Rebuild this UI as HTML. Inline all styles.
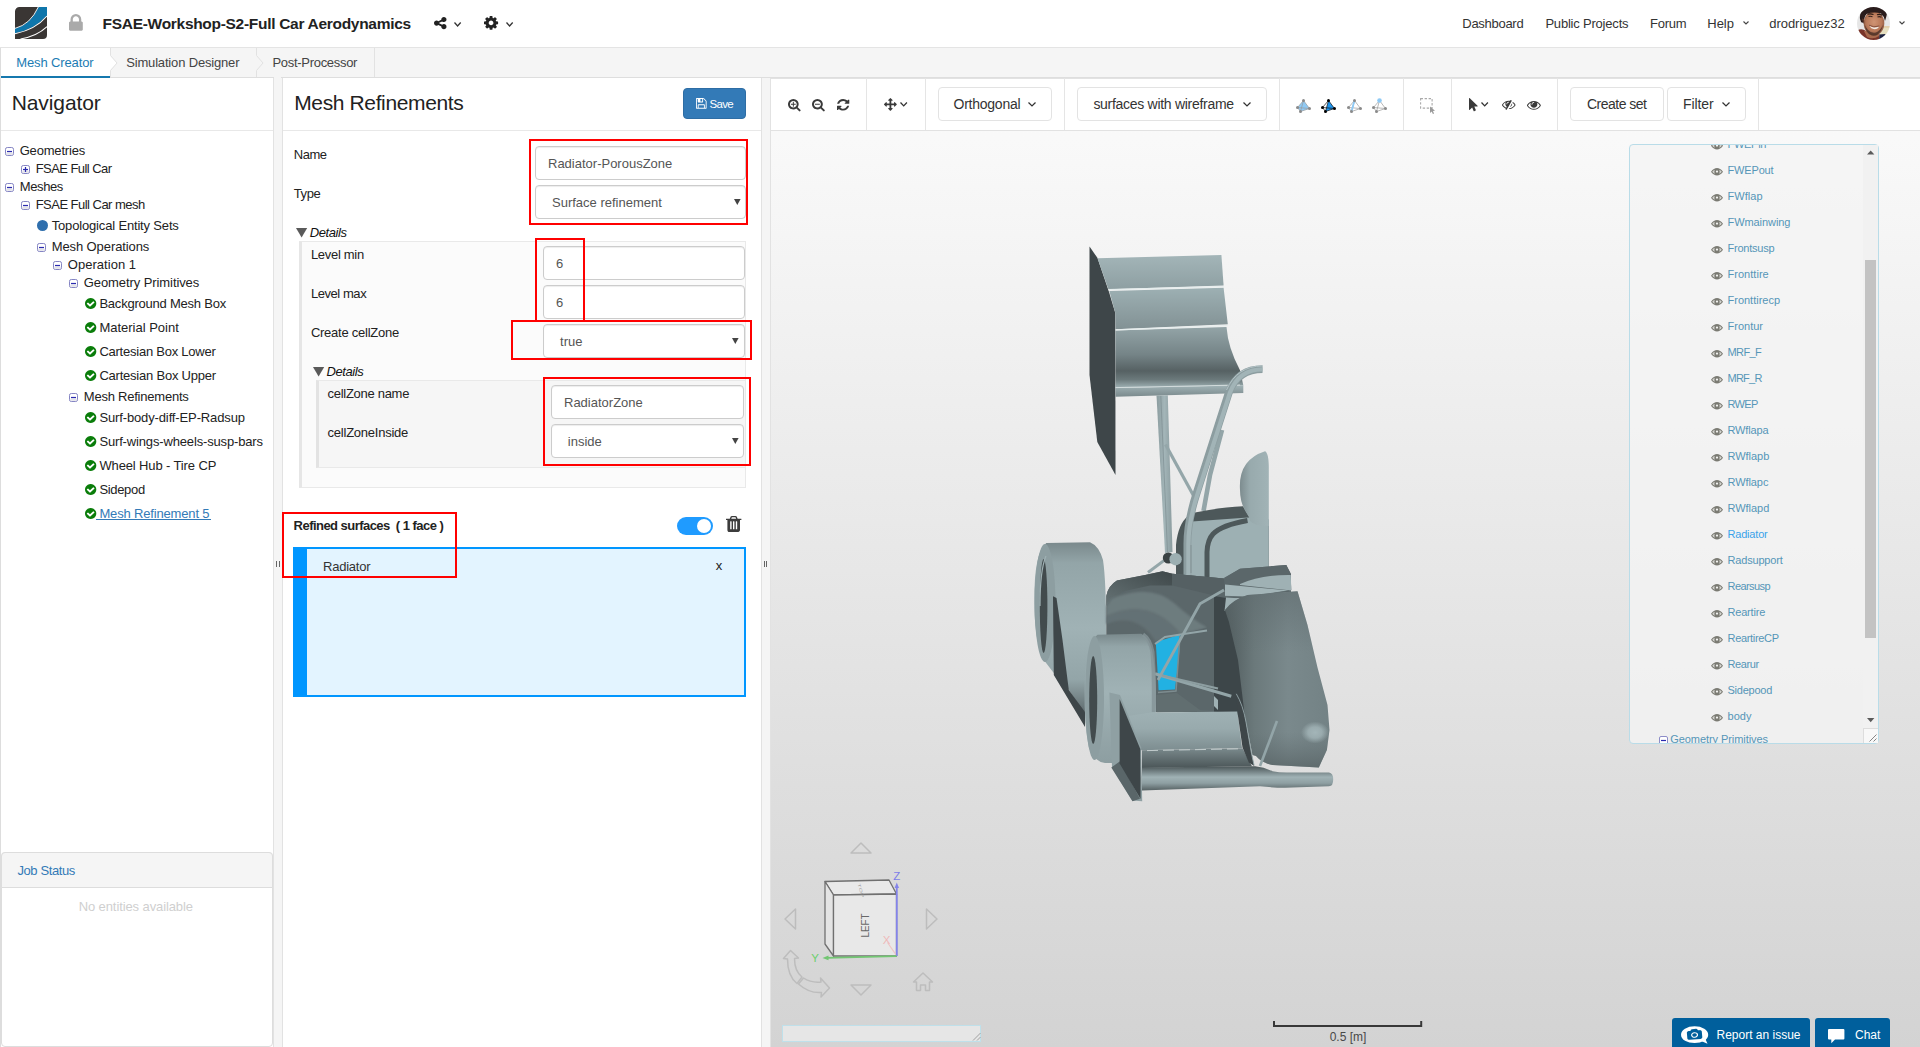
<!DOCTYPE html>
<html lang="en"><head><meta charset="utf-8"><title>FSAE-Workshop-S2-Full Car Aerodynamics</title>
<style>
html,body{margin:0;padding:0}
body{width:1920px;height:1047px;overflow:hidden;position:relative;background:#f5f5f5;font-family:"Liberation Sans",sans-serif;}
.t{position:absolute;white-space:pre;line-height:20px;height:20px;display:block}
.ic{position:absolute;display:block;overflow:visible}
.b{position:absolute;box-sizing:border-box}
.inp{position:absolute;box-sizing:border-box;background:#fff;border:1px solid #ccc;border-radius:4px;height:34px;box-shadow:inset 0 1px 1px rgba(0,0,0,.075)}
.red{position:absolute;box-sizing:border-box;border:2px solid #ff0000}
.btn{position:absolute;box-sizing:border-box;background:#fff;border:1px solid #e3e3e3;border-radius:4px}
.vd{position:absolute;width:1px;background:#e5e5e5;top:78px;height:52px}

</style></head>
<body>
<div class="b" style="left:0;top:0;width:1920px;height:48px;background:#fff;border-bottom:1px solid #e4e4e4"></div>
<svg class="ic" style="left:15px;top:7px" width="32" height="32" viewBox="0 0 32 32">
<path d="M4.5 0H32V28a4 4 0 0 1-4 4H0V4.5A4.5 4.5 0 0 1 4.500 0Z" fill="#3a3634"/>
<path d="M0 21.6Q15.500 17.500 23.400 0H32V8.400Q20 22 0 26.200Z" fill="#0f76ab"/>
<path d="M0 21.400Q15.500 17.300 23.300 0" fill="none" stroke="#fff" stroke-width="0.9"/>
<path d="M0 26.700Q20.500 22.600 32 9" fill="none" stroke="#fff" stroke-width="1.1"/>
<path d="M5.500 32Q22 29.300 32 19.700" fill="none" stroke="#fff" stroke-width="1.1"/>
</svg>
<svg class="ic" style="left:69.20px;top:14.30px;" width="13.80" height="16.70" viewBox="0 128 1152 1408" preserveAspectRatio="none"><path fill="#aaa" d="M320 768H832V576Q832 470 757.0 395.0Q682 320 576.0 320.0Q470 320 395.0 395.0Q320 470 320 576ZM1152 864V1440Q1152 1480 1124.0 1508.0Q1096 1536 1056 1536H96Q56 1536 28.0 1508.0Q0 1480 0 1440V864Q0 824 28.0 796.0Q56 768 96 768H128V576Q128 392 260.0 260.0Q392 128 576.0 128.0Q760 128 892.0 260.0Q1024 392 1024 576V768H1056Q1096 768 1124.0 796.0Q1152 824 1152 864Z"/></svg>
<span class="t" style="left:102.60px;top:13px;font-size:15.5px;color:#222;line-height:21px;height:21px;font-weight:700;letter-spacing:-0.298px;">FSAE-Workshop-S2-Full Car Aerodynamics</span>
<svg class="ic" style="left:433.90px;top:17.00px;" width="12.50" height="12.20" viewBox="0 128 1536 1536" preserveAspectRatio="none"><path fill="#222" d="M1216 1024Q1349 1024 1442.5 1117.5Q1536 1211 1536.0 1344.0Q1536 1477 1442.5 1570.5Q1349 1664 1216.0 1664.0Q1083 1664 989.5 1570.5Q896 1477 896 1344Q896 1332 898 1310L538 1130Q446 1216 320 1216Q187 1216 93.5 1122.5Q0 1029 0.0 896.0Q0 763 93.5 669.5Q187 576 320 576Q446 576 538 662L898 482Q896 460 896 448Q896 315 989.5 221.5Q1083 128 1216.0 128.0Q1349 128 1442.5 221.5Q1536 315 1536.0 448.0Q1536 581 1442.5 674.5Q1349 768 1216 768Q1090 768 998 682L638 862Q640 884 640.0 896.0Q640 908 638 930L998 1110Q1090 1024 1216 1024Z"/></svg>
<svg class="ic" style="left:454.00px;top:22.00px" width="7.20" height="4.60" viewBox="0 0 7.20 4.60"><path d="M0.5 0.5 L3.60 4.00 L6.70 0.5" fill="none" stroke="#333" stroke-width="1.3"/></svg>
<svg class="ic" style="left:483.90px;top:16.20px;" width="14.10" height="13.80" viewBox="0 128 1536 1536" preserveAspectRatio="none"><path fill="#222" d="M949.0 1077.0Q1024 1002 1024.0 896.0Q1024 790 949.0 715.0Q874 640 768.0 640.0Q662 640 587.0 715.0Q512 790 512.0 896.0Q512 1002 587.0 1077.0Q662 1152 768.0 1152.0Q874 1152 949.0 1077.0ZM1536 787V1009Q1536 1021 1528.0 1032.0Q1520 1043 1508 1045L1323 1073Q1304 1127 1284 1164Q1319 1214 1391 1302Q1401 1314 1401.0 1327.0Q1401 1340 1392 1350Q1365 1387 1293.0 1458.0Q1221 1529 1199 1529Q1187 1529 1173 1520L1035 1412Q991 1435 944 1450Q928 1586 915 1636Q908 1664 879 1664H657Q643 1664 632.5 1655.5Q622 1647 621 1634L593 1450Q544 1434 503 1413L362 1520Q352 1529 337 1529Q323 1529 312 1518Q186 1404 147 1350Q140 1340 140 1327Q140 1315 148 1304Q163 1283 199.0 1237.5Q235 1192 253 1167Q226 1117 212 1068L29 1041Q16 1039 8.0 1028.5Q0 1018 0 1005V783Q0 771 8.0 760.0Q16 749 27 747L213 719Q227 673 252 627Q212 570 145 489Q135 477 135 465Q135 455 144 442Q170 406 242.5 334.5Q315 263 337 263Q350 263 363 273L501 380Q545 357 592 342Q608 206 621 156Q628 128 657 128H879Q893 128 903.5 136.5Q914 145 915 158L943 342Q992 358 1033 379L1175 272Q1184 263 1199 263Q1212 263 1224 273Q1353 392 1389 443Q1396 451 1396 465Q1396 477 1388 488Q1373 509 1337.0 554.5Q1301 600 1283 625Q1309 675 1324 723L1507 751Q1520 753 1528.0 763.5Q1536 774 1536 787Z"/></svg>
<svg class="ic" style="left:506.00px;top:22.00px" width="7.20" height="4.60" viewBox="0 0 7.20 4.60"><path d="M0.5 0.5 L3.60 4.00 L6.70 0.5" fill="none" stroke="#333" stroke-width="1.3"/></svg>
<span class="t" style="left:1462.30px;top:13px;font-size:13px;color:#333;line-height:21px;height:21px;letter-spacing:-0.286px;">Dashboard</span>
<span class="t" style="left:1545.40px;top:13px;font-size:13px;color:#333;line-height:21px;height:21px;letter-spacing:-0.202px;">Public Projects</span>
<span class="t" style="left:1650.00px;top:13px;font-size:13px;color:#333;line-height:21px;height:21px;letter-spacing:-0.272px;">Forum</span>
<span class="t" style="left:1707.30px;top:13px;font-size:13px;color:#333;line-height:21px;height:21px;letter-spacing:-0.022px;">Help</span>
<svg class="ic" style="left:1743.00px;top:21.30px" width="6.00" height="3.60" viewBox="0 0 6.00 3.60"><path d="M0.5 0.5 L3.00 3.00 L5.50 0.5" fill="none" stroke="#444" stroke-width="1.1"/></svg>
<span class="t" style="left:1769.30px;top:13px;font-size:13px;color:#333;line-height:21px;height:21px;letter-spacing:-0.052px;">drodriguez32</span>
<svg class="ic" style="left:1899.00px;top:21.30px" width="6.00" height="3.60" viewBox="0 0 6.00 3.60"><path d="M0.5 0.5 L3.00 3.00 L5.50 0.5" fill="none" stroke="#444" stroke-width="1.1"/></svg>
<svg class="ic" style="left:1857px;top:7px" width="33" height="33" viewBox="0 0 33 33">
<defs><clipPath id="av"><circle cx="16.5" cy="16.400" r="16.500"/></clipPath>
<radialGradient id="face" cx="0.5" cy="0.45" r="0.62"><stop offset="0" stop-color="#cf9474"/><stop offset="0.6" stop-color="#b87858"/><stop offset="1" stop-color="#7b4a38"/></radialGradient>
<filter id="bl" x="-10%" y="-10%" width="120%" height="120%"><feGaussianBlur stdDeviation="0.55"/></filter></defs>
<g clip-path="url(#av)"><g filter="url(#bl)">
<rect x="-2" y="-2" width="37" height="37" fill="#e6e6e6"/>
<path d="M24 19.500H35V31H22Z" fill="#e6dfc0"/>
<path d="M26 19.200H35V20.600H26Z" fill="#e2c9a0"/>
<path d="M2 22.500Q6 21.500 9 24L16 30L22.500 27V35H-2V26Z" fill="#7a362c"/>
<path d="M22.500 27.500L28.500 27L27 32L22 35Z" fill="#1a2040"/>
<path d="M7 24L10 30Q16 33 22 29L22.500 24Z" fill="#a86a4e"/>
<ellipse cx="17" cy="16.300" rx="10.300" ry="12.300" fill="url(#face)"/>
<path d="M7.500 17Q8.500 24 12 27Q16 30 20 28Q24.500 25 26 18Q23 24 19 25.500Q14 26.500 11 23Q8.500 20.500 7.500 17Z" fill="#4a2f25" opacity="0.8"/>
<path d="M12.300 18.600Q16 21.800 22 19.600Q21 22.300 17.500 22.300Q14 22 12.300 18.600Z" fill="#f3ebe4"/>
<path d="M12 18.200Q16.500 21 22.300 19" stroke="#6a3a2c" stroke-width="0.7" fill="none"/>
<path d="M10.500 7.300Q13.500 6.300 16.500 7.600M20 7.800Q23 6.800 25.500 8.200" stroke="#2a1a16" stroke-width="1.1" fill="none"/>
<path d="M11.500 9.600Q13.500 8.800 15.500 9.800M20.500 10Q22.500 9.200 24.500 10.300" stroke="#3a2620" stroke-width="1.1" fill="none"/>
<path d="M3 12Q2 4 9 1Q16-2.500 24 0.500Q31 4 29.500 9L28 14Q27 9 24 6.500Q17 4.500 9.500 7Q7.500 9 7 12.500L5.500 16Q3.500 15 3 12Z" fill="#2a1d1c"/>
<path d="M4.800 11.500Q5.500 15 7.300 17.500L7 12Z" fill="#5a3528"/>
</g></g></svg>
<div class="b" style="left:0;top:48px;width:1920px;height:30px;background:#f5f5f5;border-bottom:1px solid #dedede;border-left:1px solid #ddd"></div>
<div class="b" style="left:1px;top:48px;width:109px;height:30px;background:#fff;border-bottom:2px solid #1578ae"></div>
<svg class="ic" style="left:108px;top:48px" width="12" height="30" viewBox="0 0 12 30">
<path d="M0 0H2V7.500L9 15L2 22.500V28H0Z" fill="#fff"/>
<path d="M2.500 0V7.500L9 15L2.500 22.500V29" fill="none" stroke="#e2e2e2" stroke-width="1"/></svg>
<svg class="ic" style="left:254px;top:48px" width="12" height="30" viewBox="0 0 12 30">
<path d="M2.500 0V7.500L9 15L2.500 22.500V29" fill="none" stroke="#e2e2e2" stroke-width="1"/></svg>
<div class="b" style="left:374px;top:48px;width:1px;height:29px;background:#e2e2e2"></div>
<div class="b" style="left:274px;top:77px;width:7px;height:1px;background:#f5f5f5"></div>
<span class="t" style="left:16.30px;top:52px;font-size:13px;color:#1c7cb3;line-height:21px;height:21px;letter-spacing:-0.136px;">Mesh Creator</span>
<span class="t" style="left:126.20px;top:52px;font-size:13px;color:#444;line-height:21px;height:21px;letter-spacing:-0.167px;">Simulation Designer</span>
<span class="t" style="left:272.50px;top:52px;font-size:13px;color:#444;line-height:21px;height:21px;letter-spacing:-0.303px;">Post-Processor</span>
<div class="b" style="left:0;top:78px;width:274px;height:969px;background:#fff;border-left:1px solid #ddd;border-right:1px solid #e2e2e2"></div>
<div class="b" style="left:1px;top:130px;width:272px;height:1px;background:#e8e8e8"></div>
<span class="t" style="left:11.70px;top:92px;font-size:21px;color:#222;line-height:21px;height:21px;letter-spacing:-0.091px;">Navigator</span>
<svg class="ic" style="left:5px;top:147px" width="9" height="9" viewBox="0 0 9 9"><rect x="0.5" y="0.5" width="8" height="8" rx="1.800" fill="#fff" stroke="#8585c4"/><rect x="1.200" y="5.500" width="6.600" height="2.300" rx="1" fill="#e2e2e8"/><path d="M2 4.500H7" stroke="#2a2ab0" stroke-width="1.2"/></svg>
<span class="t" style="left:19.70px;top:140px;font-size:13px;color:#222;line-height:21px;height:21px;letter-spacing:-0.188px;">Geometries</span>
<svg class="ic" style="left:21px;top:165px" width="9" height="9" viewBox="0 0 9 9"><rect x="0.5" y="0.5" width="8" height="8" rx="1.800" fill="#fff" stroke="#8585c4"/><rect x="1.200" y="5.500" width="6.600" height="2.300" rx="1" fill="#e2e2e8"/><path d="M2 4.500H7" stroke="#2a2ab0" stroke-width="1.2"/><path d="M4.500 2V7" stroke="#2a2ab0" stroke-width="1.2"/></svg>
<span class="t" style="left:35.70px;top:158px;font-size:13px;color:#222;line-height:21px;height:21px;letter-spacing:-0.560px;">FSAE Full Car</span>
<svg class="ic" style="left:5px;top:183px" width="9" height="9" viewBox="0 0 9 9"><rect x="0.5" y="0.5" width="8" height="8" rx="1.800" fill="#fff" stroke="#8585c4"/><rect x="1.200" y="5.500" width="6.600" height="2.300" rx="1" fill="#e2e2e8"/><path d="M2 4.500H7" stroke="#2a2ab0" stroke-width="1.2"/></svg>
<span class="t" style="left:19.70px;top:176px;font-size:13px;color:#222;line-height:21px;height:21px;letter-spacing:-0.373px;">Meshes</span>
<svg class="ic" style="left:21px;top:201px" width="9" height="9" viewBox="0 0 9 9"><rect x="0.5" y="0.5" width="8" height="8" rx="1.800" fill="#fff" stroke="#8585c4"/><rect x="1.200" y="5.500" width="6.600" height="2.300" rx="1" fill="#e2e2e8"/><path d="M2 4.500H7" stroke="#2a2ab0" stroke-width="1.2"/></svg>
<span class="t" style="left:35.70px;top:194px;font-size:13px;color:#222;line-height:21px;height:21px;letter-spacing:-0.528px;">FSAE Full Car mesh</span>
<div class="b" style="left:37px;top:219.8px;width:11px;height:11px;border-radius:50%;background:#2f6fad"></div>
<span class="t" style="left:51.70px;top:215px;font-size:13px;color:#222;line-height:21px;height:21px;letter-spacing:-0.164px;">Topological Entity Sets</span>
<svg class="ic" style="left:37px;top:243px" width="9" height="9" viewBox="0 0 9 9"><rect x="0.5" y="0.5" width="8" height="8" rx="1.800" fill="#fff" stroke="#8585c4"/><rect x="1.200" y="5.500" width="6.600" height="2.300" rx="1" fill="#e2e2e8"/><path d="M2 4.500H7" stroke="#2a2ab0" stroke-width="1.2"/></svg>
<span class="t" style="left:51.70px;top:236px;font-size:13px;color:#222;line-height:21px;height:21px;letter-spacing:-0.096px;">Mesh Operations</span>
<svg class="ic" style="left:53px;top:261px" width="9" height="9" viewBox="0 0 9 9"><rect x="0.5" y="0.5" width="8" height="8" rx="1.800" fill="#fff" stroke="#8585c4"/><rect x="1.200" y="5.500" width="6.600" height="2.300" rx="1" fill="#e2e2e8"/><path d="M2 4.500H7" stroke="#2a2ab0" stroke-width="1.2"/></svg>
<span class="t" style="left:67.80px;top:254px;font-size:13px;color:#222;line-height:21px;height:21px;letter-spacing:0.031px;">Operation 1</span>
<svg class="ic" style="left:69px;top:279px" width="9" height="9" viewBox="0 0 9 9"><rect x="0.5" y="0.5" width="8" height="8" rx="1.800" fill="#fff" stroke="#8585c4"/><rect x="1.200" y="5.500" width="6.600" height="2.300" rx="1" fill="#e2e2e8"/><path d="M2 4.500H7" stroke="#2a2ab0" stroke-width="1.2"/></svg>
<span class="t" style="left:83.80px;top:272px;font-size:13px;color:#222;line-height:21px;height:21px;letter-spacing:-0.086px;">Geometry Primitives</span>
<svg class="ic" style="left:84.90px;top:297.90px;background:radial-gradient(circle,#fff 55%,rgba(255,255,255,0) 60%)" width="11.30" height="11.10" viewBox="0 128 1536 1536" preserveAspectRatio="none"><path fill="#0a7d0a" d="M1284 734Q1284 706 1266 688L1175 598Q1156 579 1130.0 579.0Q1104 579 1085 598L677 1005L451 779Q432 760 406.0 760.0Q380 760 361 779L270 869Q252 887 252 915Q252 942 270 960L632 1322Q651 1341 677 1341Q704 1341 723 1322L1266 779Q1284 761 1284 734ZM1433.0 510.5Q1536 687 1536.0 896.0Q1536 1105 1433.0 1281.5Q1330 1458 1153.5 1561.0Q977 1664 768.0 1664.0Q559 1664 382.5 1561.0Q206 1458 103.0 1281.5Q0 1105 0.0 896.0Q0 687 103.0 510.5Q206 334 382.5 231.0Q559 128 768.0 128.0Q977 128 1153.5 231.0Q1330 334 1433.0 510.5Z"/></svg>
<span class="t" style="left:99.40px;top:293px;font-size:13px;color:#222;line-height:21px;height:21px;letter-spacing:-0.221px;">Background Mesh Box</span>
<svg class="ic" style="left:84.90px;top:321.90px;background:radial-gradient(circle,#fff 55%,rgba(255,255,255,0) 60%)" width="11.30" height="11.10" viewBox="0 128 1536 1536" preserveAspectRatio="none"><path fill="#0a7d0a" d="M1284 734Q1284 706 1266 688L1175 598Q1156 579 1130.0 579.0Q1104 579 1085 598L677 1005L451 779Q432 760 406.0 760.0Q380 760 361 779L270 869Q252 887 252 915Q252 942 270 960L632 1322Q651 1341 677 1341Q704 1341 723 1322L1266 779Q1284 761 1284 734ZM1433.0 510.5Q1536 687 1536.0 896.0Q1536 1105 1433.0 1281.5Q1330 1458 1153.5 1561.0Q977 1664 768.0 1664.0Q559 1664 382.5 1561.0Q206 1458 103.0 1281.5Q0 1105 0.0 896.0Q0 687 103.0 510.5Q206 334 382.5 231.0Q559 128 768.0 128.0Q977 128 1153.5 231.0Q1330 334 1433.0 510.5Z"/></svg>
<span class="t" style="left:99.40px;top:317px;font-size:13px;color:#222;line-height:21px;height:21px;letter-spacing:-0.004px;">Material Point</span>
<svg class="ic" style="left:84.90px;top:345.90px;background:radial-gradient(circle,#fff 55%,rgba(255,255,255,0) 60%)" width="11.30" height="11.10" viewBox="0 128 1536 1536" preserveAspectRatio="none"><path fill="#0a7d0a" d="M1284 734Q1284 706 1266 688L1175 598Q1156 579 1130.0 579.0Q1104 579 1085 598L677 1005L451 779Q432 760 406.0 760.0Q380 760 361 779L270 869Q252 887 252 915Q252 942 270 960L632 1322Q651 1341 677 1341Q704 1341 723 1322L1266 779Q1284 761 1284 734ZM1433.0 510.5Q1536 687 1536.0 896.0Q1536 1105 1433.0 1281.5Q1330 1458 1153.5 1561.0Q977 1664 768.0 1664.0Q559 1664 382.5 1561.0Q206 1458 103.0 1281.5Q0 1105 0.0 896.0Q0 687 103.0 510.5Q206 334 382.5 231.0Q559 128 768.0 128.0Q977 128 1153.5 231.0Q1330 334 1433.0 510.5Z"/></svg>
<span class="t" style="left:99.40px;top:341px;font-size:13px;color:#222;line-height:21px;height:21px;letter-spacing:-0.239px;">Cartesian Box Lower</span>
<svg class="ic" style="left:84.90px;top:369.90px;background:radial-gradient(circle,#fff 55%,rgba(255,255,255,0) 60%)" width="11.30" height="11.10" viewBox="0 128 1536 1536" preserveAspectRatio="none"><path fill="#0a7d0a" d="M1284 734Q1284 706 1266 688L1175 598Q1156 579 1130.0 579.0Q1104 579 1085 598L677 1005L451 779Q432 760 406.0 760.0Q380 760 361 779L270 869Q252 887 252 915Q252 942 270 960L632 1322Q651 1341 677 1341Q704 1341 723 1322L1266 779Q1284 761 1284 734ZM1433.0 510.5Q1536 687 1536.0 896.0Q1536 1105 1433.0 1281.5Q1330 1458 1153.5 1561.0Q977 1664 768.0 1664.0Q559 1664 382.5 1561.0Q206 1458 103.0 1281.5Q0 1105 0.0 896.0Q0 687 103.0 510.5Q206 334 382.5 231.0Q559 128 768.0 128.0Q977 128 1153.5 231.0Q1330 334 1433.0 510.5Z"/></svg>
<span class="t" style="left:99.40px;top:365px;font-size:13px;color:#222;line-height:21px;height:21px;letter-spacing:-0.220px;">Cartesian Box Upper</span>
<svg class="ic" style="left:69px;top:393px" width="9" height="9" viewBox="0 0 9 9"><rect x="0.5" y="0.5" width="8" height="8" rx="1.800" fill="#fff" stroke="#8585c4"/><rect x="1.200" y="5.500" width="6.600" height="2.300" rx="1" fill="#e2e2e8"/><path d="M2 4.500H7" stroke="#2a2ab0" stroke-width="1.2"/></svg>
<span class="t" style="left:83.80px;top:386px;font-size:13px;color:#222;line-height:21px;height:21px;letter-spacing:-0.227px;">Mesh Refinements</span>
<svg class="ic" style="left:84.90px;top:411.90px;background:radial-gradient(circle,#fff 55%,rgba(255,255,255,0) 60%)" width="11.30" height="11.10" viewBox="0 128 1536 1536" preserveAspectRatio="none"><path fill="#0a7d0a" d="M1284 734Q1284 706 1266 688L1175 598Q1156 579 1130.0 579.0Q1104 579 1085 598L677 1005L451 779Q432 760 406.0 760.0Q380 760 361 779L270 869Q252 887 252 915Q252 942 270 960L632 1322Q651 1341 677 1341Q704 1341 723 1322L1266 779Q1284 761 1284 734ZM1433.0 510.5Q1536 687 1536.0 896.0Q1536 1105 1433.0 1281.5Q1330 1458 1153.5 1561.0Q977 1664 768.0 1664.0Q559 1664 382.5 1561.0Q206 1458 103.0 1281.5Q0 1105 0.0 896.0Q0 687 103.0 510.5Q206 334 382.5 231.0Q559 128 768.0 128.0Q977 128 1153.5 231.0Q1330 334 1433.0 510.5Z"/></svg>
<span class="t" style="left:99.40px;top:407px;font-size:13px;color:#222;line-height:21px;height:21px;letter-spacing:-0.131px;">Surf-body-diff-EP-Radsup</span>
<svg class="ic" style="left:84.90px;top:435.90px;background:radial-gradient(circle,#fff 55%,rgba(255,255,255,0) 60%)" width="11.30" height="11.10" viewBox="0 128 1536 1536" preserveAspectRatio="none"><path fill="#0a7d0a" d="M1284 734Q1284 706 1266 688L1175 598Q1156 579 1130.0 579.0Q1104 579 1085 598L677 1005L451 779Q432 760 406.0 760.0Q380 760 361 779L270 869Q252 887 252 915Q252 942 270 960L632 1322Q651 1341 677 1341Q704 1341 723 1322L1266 779Q1284 761 1284 734ZM1433.0 510.5Q1536 687 1536.0 896.0Q1536 1105 1433.0 1281.5Q1330 1458 1153.5 1561.0Q977 1664 768.0 1664.0Q559 1664 382.5 1561.0Q206 1458 103.0 1281.5Q0 1105 0.0 896.0Q0 687 103.0 510.5Q206 334 382.5 231.0Q559 128 768.0 128.0Q977 128 1153.5 231.0Q1330 334 1433.0 510.5Z"/></svg>
<span class="t" style="left:99.40px;top:431px;font-size:13px;color:#222;line-height:21px;height:21px;letter-spacing:-0.153px;">Surf-wings-wheels-susp-bars</span>
<svg class="ic" style="left:84.90px;top:459.90px;background:radial-gradient(circle,#fff 55%,rgba(255,255,255,0) 60%)" width="11.30" height="11.10" viewBox="0 128 1536 1536" preserveAspectRatio="none"><path fill="#0a7d0a" d="M1284 734Q1284 706 1266 688L1175 598Q1156 579 1130.0 579.0Q1104 579 1085 598L677 1005L451 779Q432 760 406.0 760.0Q380 760 361 779L270 869Q252 887 252 915Q252 942 270 960L632 1322Q651 1341 677 1341Q704 1341 723 1322L1266 779Q1284 761 1284 734ZM1433.0 510.5Q1536 687 1536.0 896.0Q1536 1105 1433.0 1281.5Q1330 1458 1153.5 1561.0Q977 1664 768.0 1664.0Q559 1664 382.5 1561.0Q206 1458 103.0 1281.5Q0 1105 0.0 896.0Q0 687 103.0 510.5Q206 334 382.5 231.0Q559 128 768.0 128.0Q977 128 1153.5 231.0Q1330 334 1433.0 510.5Z"/></svg>
<span class="t" style="left:99.40px;top:455px;font-size:13px;color:#222;line-height:21px;height:21px;letter-spacing:-0.126px;">Wheel Hub - Tire CP</span>
<svg class="ic" style="left:84.90px;top:483.90px;background:radial-gradient(circle,#fff 55%,rgba(255,255,255,0) 60%)" width="11.30" height="11.10" viewBox="0 128 1536 1536" preserveAspectRatio="none"><path fill="#0a7d0a" d="M1284 734Q1284 706 1266 688L1175 598Q1156 579 1130.0 579.0Q1104 579 1085 598L677 1005L451 779Q432 760 406.0 760.0Q380 760 361 779L270 869Q252 887 252 915Q252 942 270 960L632 1322Q651 1341 677 1341Q704 1341 723 1322L1266 779Q1284 761 1284 734ZM1433.0 510.5Q1536 687 1536.0 896.0Q1536 1105 1433.0 1281.5Q1330 1458 1153.5 1561.0Q977 1664 768.0 1664.0Q559 1664 382.5 1561.0Q206 1458 103.0 1281.5Q0 1105 0.0 896.0Q0 687 103.0 510.5Q206 334 382.5 231.0Q559 128 768.0 128.0Q977 128 1153.5 231.0Q1330 334 1433.0 510.5Z"/></svg>
<span class="t" style="left:99.40px;top:479px;font-size:13px;color:#222;line-height:21px;height:21px;letter-spacing:-0.330px;">Sidepod</span>
<svg class="ic" style="left:84.90px;top:507.90px;background:radial-gradient(circle,#fff 55%,rgba(255,255,255,0) 60%)" width="11.30" height="11.10" viewBox="0 128 1536 1536" preserveAspectRatio="none"><path fill="#0a7d0a" d="M1284 734Q1284 706 1266 688L1175 598Q1156 579 1130.0 579.0Q1104 579 1085 598L677 1005L451 779Q432 760 406.0 760.0Q380 760 361 779L270 869Q252 887 252 915Q252 942 270 960L632 1322Q651 1341 677 1341Q704 1341 723 1322L1266 779Q1284 761 1284 734ZM1433.0 510.5Q1536 687 1536.0 896.0Q1536 1105 1433.0 1281.5Q1330 1458 1153.5 1561.0Q977 1664 768.0 1664.0Q559 1664 382.5 1561.0Q206 1458 103.0 1281.5Q0 1105 0.0 896.0Q0 687 103.0 510.5Q206 334 382.5 231.0Q559 128 768.0 128.0Q977 128 1153.5 231.0Q1330 334 1433.0 510.5Z"/></svg>
<div class="b" style="left:96.300px;top:519px;width:114.500px;height:1px;background:#337ab7"></div>
<span class="t" style="left:99.40px;top:503px;font-size:13px;color:#337ab7;line-height:21px;height:21px;letter-spacing:-0.160px;">Mesh Refinement 5</span>
<div class="b" style="left:1px;top:852px;width:272px;height:195px;background:#fff;border:1px solid #ddd;border-radius:4px"></div>
<div class="b" style="left:1px;top:852px;width:272px;height:36px;background:#f5f5f5;border:1px solid #ddd;border-radius:4px 4px 0 0"></div>
<span class="t" style="left:17.40px;top:860px;font-size:13px;color:#337ab7;line-height:21px;height:21px;letter-spacing:-0.383px;">Job Status</span>
<span class="t" style="left:78.70px;top:896px;font-size:13px;color:#cfcfcf;line-height:21px;height:21px;letter-spacing:-0.101px;">No entities available</span>
<div class="b" style="left:282px;top:78px;width:480px;height:969px;background:#fff;border-left:1px solid #e2e2e2;border-right:1px solid #e2e2e2"></div>
<div class="b" style="left:283px;top:130px;width:478px;height:1px;background:#e8e8e8"></div>
<span class="t" style="left:294.20px;top:92px;font-size:21px;color:#222;line-height:21px;height:21px;letter-spacing:-0.366px;">Mesh Refinements</span>
<div class="b" style="left:683px;top:88px;width:63px;height:31px;background:#337ab7;border:1px solid #2e6da4;border-radius:4px"></div>
<svg class="ic" style="left:696.20px;top:98.20px;" width="10.60" height="10.70" viewBox="0 128 1536 1536" preserveAspectRatio="none"><path fill="#fff" d="M384 1536H1152V1152H384ZM1280 1536H1408V640Q1408 626 1398.0 601.5Q1388 577 1378 567L1097 286Q1087 276 1063.0 266.0Q1039 256 1024 256V672Q1024 712 996.0 740.0Q968 768 928 768H352Q312 768 284.0 740.0Q256 712 256 672V256H128V1536H256V1120Q256 1080 284.0 1052.0Q312 1024 352 1024H1184Q1224 1024 1252.0 1052.0Q1280 1080 1280 1120ZM896 608V288Q896 275 886.5 265.5Q877 256 864 256H672Q659 256 649.5 265.5Q640 275 640 288V608Q640 621 649.5 630.5Q659 640 672 640H864Q877 640 886.5 630.5Q896 621 896 608ZM1536 640V1568Q1536 1608 1508.0 1636.0Q1480 1664 1440 1664H96Q56 1664 28.0 1636.0Q0 1608 0 1568V224Q0 184 28.0 156.0Q56 128 96 128H1024Q1064 128 1112.0 148.0Q1160 168 1188 196L1468 476Q1496 504 1516.0 552.0Q1536 600 1536 640Z"/></svg>
<span class="t" style="left:709.40px;top:94px;font-size:11.5px;color:#fff;letter-spacing:-0.640px;">Save</span>
<span class="t" style="left:293.70px;top:144px;font-size:13px;color:#222;line-height:21px;height:21px;letter-spacing:-0.425px;">Name</span>
<span class="t" style="left:293.70px;top:183px;font-size:13px;color:#222;line-height:21px;height:21px;letter-spacing:-0.352px;">Type</span>
<div class="inp" style="left:535px;top:146px;width:211px"></div>
<span class="t" style="left:548.00px;top:153px;font-size:13px;color:#555;line-height:21px;height:21px;">Radiator-PorousZone</span>
<div class="inp" style="left:535px;top:185px;width:211px"></div>
<span class="t" style="left:552.00px;top:192px;font-size:13px;color:#555;line-height:21px;height:21px;">Surface refinement</span>
<svg class="ic" style="left:734px;top:199.2px" width="6.6" height="6" viewBox="0 0 6.6 6"><path d="M0 0H6.6L3.3 6Z" fill="#444"/></svg>
<svg class="ic" style="left:296px;top:228.3px" width="11.2" height="9.6" viewBox="0 0 11.2 9.6"><path d="M0 0H11.2L5.6 9.6Z" fill="#5a5a5a"/></svg>
<span class="t" style="left:309.70px;top:222px;font-size:13px;color:#111;line-height:21px;height:21px;font-style:italic;letter-spacing:-0.422px;">Details</span>
<div class="b" style="left:299px;top:241px;width:447px;height:247px;background:#fbfbfb;border:1px solid #e9e9e9;border-left:3px solid #e6e6e6"></div>
<span class="t" style="left:310.90px;top:244px;font-size:13px;color:#222;line-height:21px;height:21px;letter-spacing:-0.300px;">Level min</span>
<span class="t" style="left:310.90px;top:283px;font-size:13px;color:#222;line-height:21px;height:21px;letter-spacing:-0.434px;">Level max</span>
<span class="t" style="left:310.90px;top:322px;font-size:13px;color:#222;line-height:21px;height:21px;letter-spacing:-0.250px;">Create cellZone</span>
<div class="inp" style="left:543px;top:246px;width:202px"></div>
<span class="t" style="left:555.90px;top:253px;font-size:13px;color:#555;line-height:21px;height:21px;">6</span>
<div class="inp" style="left:543px;top:285px;width:202px"></div>
<span class="t" style="left:555.90px;top:292px;font-size:13px;color:#555;line-height:21px;height:21px;">6</span>
<div class="inp" style="left:543px;top:324px;width:202px"></div>
<span class="t" style="left:560.10px;top:331px;font-size:13px;color:#555;line-height:21px;height:21px;">true</span>
<svg class="ic" style="left:732.3px;top:338.2px" width="6.6" height="6" viewBox="0 0 6.6 6"><path d="M0 0H6.6L3.3 6Z" fill="#444"/></svg>
<svg class="ic" style="left:312.8px;top:366.9px" width="11.2" height="9.6" viewBox="0 0 11.2 9.6"><path d="M0 0H11.2L5.6 9.6Z" fill="#5a5a5a"/></svg>
<span class="t" style="left:326.50px;top:361px;font-size:13px;color:#111;line-height:21px;height:21px;font-style:italic;letter-spacing:-0.422px;">Details</span>
<div class="b" style="left:316px;top:380px;width:430px;height:88px;background:#f6f6f6;border:1px solid #e9e9e9;border-left:3px solid #e3e3e3"></div>
<span class="t" style="left:327.60px;top:383px;font-size:13px;color:#222;line-height:21px;height:21px;letter-spacing:-0.291px;">cellZone name</span>
<span class="t" style="left:327.60px;top:422px;font-size:13px;color:#222;line-height:21px;height:21px;letter-spacing:-0.242px;">cellZoneInside</span>
<div class="inp" style="left:551px;top:385px;width:193px"></div>
<span class="t" style="left:564.00px;top:392px;font-size:13px;color:#555;line-height:21px;height:21px;">RadiatorZone</span>
<div class="inp" style="left:551px;top:424px;width:193px"></div>
<span class="t" style="left:567.80px;top:431px;font-size:13px;color:#555;line-height:21px;height:21px;">inside</span>
<svg class="ic" style="left:731.6px;top:438.2px" width="6.6" height="6" viewBox="0 0 6.6 6"><path d="M0 0H6.6L3.3 6Z" fill="#444"/></svg>
<span class="t" style="left:293.60px;top:515px;font-size:13px;color:#222;line-height:21px;height:21px;font-weight:700;letter-spacing:-0.541px;">Refined surfaces  ( 1 face )</span>
<div class="b" style="left:677px;top:516.500px;width:36px;height:18px;border-radius:9px;background:#1f9bff"></div>
<div class="b" style="left:696.500px;top:518.500px;width:14px;height:14px;border-radius:50%;background:#fff"></div>
<svg class="ic" style="left:726.00px;top:516.00px;" width="15.40" height="16.00" viewBox="0 128 1408 1536" preserveAspectRatio="none"><path fill="#3c3c3c" d="M512 1376V672Q512 658 503.0 649.0Q494 640 480 640H416Q402 640 393.0 649.0Q384 658 384 672V1376Q384 1390 393.0 1399.0Q402 1408 416 1408H480Q494 1408 503.0 1399.0Q512 1390 512 1376ZM768 1376V672Q768 658 759.0 649.0Q750 640 736 640H672Q658 640 649.0 649.0Q640 658 640 672V1376Q640 1390 649.0 1399.0Q658 1408 672 1408H736Q750 1408 759.0 1399.0Q768 1390 768 1376ZM1024 1376V672Q1024 658 1015.0 649.0Q1006 640 992 640H928Q914 640 905.0 649.0Q896 658 896 672V1376Q896 1390 905.0 1399.0Q914 1408 928 1408H992Q1006 1408 1015.0 1399.0Q1024 1390 1024 1376ZM480 384H928L880 267Q873 258 863 256H546Q536 258 529 267ZM1408 416V480Q1408 494 1399.0 503.0Q1390 512 1376 512H1280V1460Q1280 1543 1233.0 1603.5Q1186 1664 1120 1664H288Q222 1664 175.0 1605.5Q128 1547 128 1464V512H32Q18 512 9.0 503.0Q0 494 0 480V416Q0 402 9.0 393.0Q18 384 32 384H341L411 217Q426 180 465.0 154.0Q504 128 544 128H864Q904 128 943.0 154.0Q982 180 997 217L1067 384H1376Q1390 384 1399.0 393.0Q1408 402 1408 416Z"/></svg>
<div class="b" style="left:293px;top:547px;width:453px;height:150px;background:#e3f4ff;border:2px solid #0096ff;border-left:14px solid #0096ff"></div>
<span class="t" style="left:323.00px;top:556px;font-size:13px;color:#333;line-height:21px;height:21px;letter-spacing:-0.229px;">Radiator</span>
<span class="t" style="left:715.80px;top:555px;font-size:13px;color:#222;line-height:21px;height:21px;">x</span>
<div class="b" style="left:276px;top:560.500px;width:1px;height:6px;background:#666"></div><div class="b" style="left:278.5px;top:560.500px;width:1px;height:6px;background:#666"></div>
<div class="b" style="left:763.5px;top:560.500px;width:1px;height:6px;background:#666"></div><div class="b" style="left:766.0px;top:560.500px;width:1px;height:6px;background:#666"></div>
<div class="red" style="left:529px;top:139px;width:218.500px;height:86px"></div>
<div class="red" style="left:535px;top:238px;width:50px;height:84px"></div>
<div class="red" style="left:511px;top:320px;width:241px;height:40px"></div>
<div class="red" style="left:543px;top:377px;width:208px;height:89px"></div>
<div class="red" style="left:282px;top:512px;width:175px;height:66px"></div>
<div class="b" style="left:770px;top:78px;width:1150px;height:969px;background:linear-gradient(180deg,#fafafa 0,#f9f9f9 60px,#d3d3d3 969px);border-left:1px solid #e2e2e2;border-top:1px solid #e2e2e2"></div>
<div class="b" style="left:771px;top:79px;width:1149px;height:52px;background:#fff;border-bottom:1px solid #e2e2e2"></div>
<div class="vd" style="left:866px"></div>
<div class="vd" style="left:925px"></div>
<div class="vd" style="left:1064px"></div>
<div class="vd" style="left:1279px"></div>
<div class="vd" style="left:1403px"></div>
<div class="vd" style="left:1451px"></div>
<div class="vd" style="left:1557px"></div>
<div class="vd" style="left:1758px"></div>
<svg class="ic" style="left:788.00px;top:98.90px;" width="12.60" height="12.40" viewBox="0 128 1664 1664" preserveAspectRatio="none"><path fill="#3a3a3a" d="M1024 800V864Q1024 877 1014.5 886.5Q1005 896 992 896H768V1120Q768 1133 758.5 1142.5Q749 1152 736 1152H672Q659 1152 649.5 1142.5Q640 1133 640 1120V896H416Q403 896 393.5 886.5Q384 877 384 864V800Q384 787 393.5 777.5Q403 768 416 768H640V544Q640 531 649.5 521.5Q659 512 672 512H736Q749 512 758.5 521.5Q768 531 768 544V768H992Q1005 768 1014.5 777.5Q1024 787 1024 800ZM1020.5 1148.5Q1152 1017 1152.0 832.0Q1152 647 1020.5 515.5Q889 384 704.0 384.0Q519 384 387.5 515.5Q256 647 256.0 832.0Q256 1017 387.5 1148.5Q519 1280 704.0 1280.0Q889 1280 1020.5 1148.5ZM1536 1792Q1482 1792 1446 1754L1103 1412Q924 1536 704 1536Q561 1536 430.5 1480.5Q300 1425 205.5 1330.5Q111 1236 55.5 1105.5Q0 975 0.0 832.0Q0 689 55.5 558.5Q111 428 205.5 333.5Q300 239 430.5 183.5Q561 128 704.0 128.0Q847 128 977.5 183.5Q1108 239 1202.5 333.5Q1297 428 1352.5 558.5Q1408 689 1408 832Q1408 1052 1284 1231L1627 1574Q1664 1611 1664.0 1664.0Q1664 1717 1626.5 1754.5Q1589 1792 1536 1792Z"/></svg>
<svg class="ic" style="left:812.40px;top:98.90px;" width="12.80" height="12.40" viewBox="0 128 1664 1664" preserveAspectRatio="none"><path fill="#3a3a3a" d="M1024 800V864Q1024 877 1014.5 886.5Q1005 896 992 896H416Q403 896 393.5 886.5Q384 877 384 864V800Q384 787 393.5 777.5Q403 768 416 768H992Q1005 768 1014.5 777.5Q1024 787 1024 800ZM1020.5 1148.5Q1152 1017 1152.0 832.0Q1152 647 1020.5 515.5Q889 384 704.0 384.0Q519 384 387.5 515.5Q256 647 256.0 832.0Q256 1017 387.5 1148.5Q519 1280 704.0 1280.0Q889 1280 1020.5 1148.5ZM1536 1792Q1482 1792 1446 1754L1103 1412Q924 1536 704 1536Q561 1536 430.5 1480.5Q300 1425 205.5 1330.5Q111 1236 55.5 1105.5Q0 975 0.0 832.0Q0 689 55.5 558.5Q111 428 205.5 333.5Q300 239 430.5 183.5Q561 128 704.0 128.0Q847 128 977.5 183.5Q1108 239 1202.5 333.5Q1297 428 1352.5 558.5Q1408 689 1408 832Q1408 1052 1284 1231L1627 1574Q1664 1611 1664.0 1664.0Q1664 1717 1626.5 1754.5Q1589 1792 1536 1792Z"/></svg>
<svg class="ic" style="left:836.90px;top:98.60px;" width="12.30" height="11.60" viewBox="0 128 1536 1536" preserveAspectRatio="none"><path fill="#3a3a3a" d="M1511 1056Q1511 1061 1510 1063Q1446 1331 1242.0 1497.5Q1038 1664 764 1664Q618 1664 481.5 1609.0Q345 1554 238 1452L109 1581Q90 1600 64.0 1600.0Q38 1600 19.0 1581.0Q0 1562 0 1536V1088Q0 1062 19.0 1043.0Q38 1024 64 1024H512Q538 1024 557.0 1043.0Q576 1062 576.0 1088.0Q576 1114 557 1133L420 1270Q491 1336 581.0 1372.0Q671 1408 768 1408Q902 1408 1018.0 1343.0Q1134 1278 1204 1164Q1215 1147 1257 1047Q1265 1024 1287 1024H1479Q1492 1024 1501.5 1033.5Q1511 1043 1511 1056ZM1536 256V704Q1536 730 1517.0 749.0Q1498 768 1472 768H1024Q998 768 979.0 749.0Q960 730 960.0 704.0Q960 678 979 659L1117 521Q969 384 768 384Q634 384 518.0 449.0Q402 514 332 628Q321 645 279 745Q271 768 249 768H50Q37 768 27.5 758.5Q18 749 18 736V729Q83 461 288.0 294.5Q493 128 768 128Q914 128 1052.0 183.5Q1190 239 1297 340L1427 211Q1446 192 1472.0 192.0Q1498 192 1517.0 211.0Q1536 230 1536 256Z"/></svg>
<svg class="ic" style="left:883.90px;top:98.20px;" width="12.80" height="12.80" viewBox="0 0 1792 1792" preserveAspectRatio="none"><path fill="#3a3a3a" d="M1773 941 1517 1197Q1498 1216 1472.0 1216.0Q1446 1216 1427.0 1197.0Q1408 1178 1408 1152V1024H1024V1408H1152Q1178 1408 1197.0 1427.0Q1216 1446 1216.0 1472.0Q1216 1498 1197 1517L941 1773Q922 1792 896.0 1792.0Q870 1792 851 1773L595 1517Q576 1498 576.0 1472.0Q576 1446 595.0 1427.0Q614 1408 640 1408H768V1024H384V1152Q384 1178 365.0 1197.0Q346 1216 320.0 1216.0Q294 1216 275 1197L19 941Q0 922 0.0 896.0Q0 870 19 851L275 595Q294 576 320.0 576.0Q346 576 365.0 595.0Q384 614 384 640V768H768V384H640Q614 384 595.0 365.0Q576 346 576.0 320.0Q576 294 595 275L851 19Q870 0 896.0 0.0Q922 0 941 19L1197 275Q1216 294 1216.0 320.0Q1216 346 1197.0 365.0Q1178 384 1152 384H1024V768H1408V640Q1408 614 1427.0 595.0Q1446 576 1472.0 576.0Q1498 576 1517 595L1773 851Q1792 870 1792.0 896.0Q1792 922 1773 941Z"/></svg>
<svg class="ic" style="left:899.80px;top:102.30px" width="7.40" height="4.50" viewBox="0 0 7.40 4.50"><path d="M0.5 0.5 L3.70 3.90 L6.90 0.5" fill="none" stroke="#333" stroke-width="1.3"/></svg>
<div class="btn" style="left:938px;top:87px;width:114px;height:34px"></div>
<span class="t" style="left:953.50px;top:94px;font-size:14px;color:#333;letter-spacing:-0.239px;">Orthogonal</span>
<svg class="ic" style="left:1028.00px;top:102.30px" width="8.00" height="4.50" viewBox="0 0 8.00 4.50"><path d="M0.5 0.5 L4.00 3.90 L7.50 0.5" fill="none" stroke="#333" stroke-width="1.3"/></svg>
<div class="btn" style="left:1077px;top:87px;width:190px;height:34px"></div>
<span class="t" style="left:1093.40px;top:94px;font-size:14px;color:#333;letter-spacing:-0.290px;">surfaces with wireframe</span>
<svg class="ic" style="left:1243.00px;top:102.30px" width="8.00" height="4.50" viewBox="0 0 8.00 4.50"><path d="M0.5 0.5 L4.00 3.90 L7.50 0.5" fill="none" stroke="#333" stroke-width="1.3"/></svg>
<svg class="ic" style="left:1296px;top:98.500px" width="15" height="14" viewBox="0 0 15 14"><path d="M7.5 1.5L1.5 8.5L4.5 12.5L13.5 9.5Z" fill="#8fcaf5"/><path d="M7.5 1.5L1.5 8.5L4.5 12.5L13.5 9.5L7.5 1.5L4.5 12.5M1.5 8.5L13.5 9.5" fill="none" stroke="#9a9a9a" stroke-width="0.7"/><circle cx="7.5" cy="1.5" r="1.500" fill="#8a8a8a"/><circle cx="1.5" cy="8.5" r="1.500" fill="#8a8a8a"/><circle cx="4.5" cy="12.5" r="1.500" fill="#8a8a8a"/><circle cx="13.5" cy="9.5" r="1.500" fill="#8a8a8a"/></svg>
<svg class="ic" style="left:1321px;top:98.500px" width="15" height="14" viewBox="0 0 15 14"><path d="M7.5 1.5L4.5 12.5L13.5 9.5Z" fill="#1e96f0"/><path d="M7.5 1.5L1.5 8.5L4.5 12.5L13.5 9.5L7.5 1.5L4.5 12.5M1.5 8.5L13.5 9.5" fill="none" stroke="#111" stroke-width="0.7"/><circle cx="7.5" cy="1.5" r="1.500" fill="#000"/><circle cx="1.5" cy="8.5" r="1.500" fill="#000"/><circle cx="4.5" cy="12.5" r="1.500" fill="#000"/><circle cx="13.5" cy="9.5" r="1.500" fill="#000"/></svg>
<svg class="ic" style="left:1346.8px;top:98.500px" width="15" height="14" viewBox="0 0 15 14"><path d="M7.5 1.5L1.5 8.5L4.5 12.5L13.5 9.5L7.5 1.5L4.5 12.5M1.5 8.5L13.5 9.5" fill="none" stroke="#9a9a9a" stroke-width="0.7"/><path d="M7.5 1.5L4.5 12.5" stroke="#8fcaf5" stroke-width="1.8"/><circle cx="7.5" cy="1.5" r="1.500" fill="#8a8a8a"/><circle cx="1.5" cy="8.5" r="1.500" fill="#8a8a8a"/><circle cx="4.5" cy="12.5" r="1.500" fill="#8a8a8a"/><circle cx="13.5" cy="9.5" r="1.500" fill="#8a8a8a"/></svg>
<svg class="ic" style="left:1372px;top:98.500px" width="15" height="14" viewBox="0 0 15 14"><path d="M7.5 1.5L1.5 8.5L4.5 12.5L13.5 9.5L7.5 1.5L4.5 12.5M1.5 8.5L13.5 9.5" fill="none" stroke="#9a9a9a" stroke-width="0.7"/><circle cx="7.5" cy="1.5" r="2.300" fill="#8fcaf5"/><circle cx="1.5" cy="8.5" r="1.500" fill="#8a8a8a"/><circle cx="4.5" cy="12.5" r="1.500" fill="#8a8a8a"/><circle cx="13.5" cy="9.5" r="1.500" fill="#8a8a8a"/></svg>
<svg class="ic" style="left:1420px;top:98px" width="16" height="16" viewBox="0 0 16 16">
<rect x="0.6" y="0.6" width="11.500" height="9.500" fill="none" stroke="#aaa" stroke-width="1.1" stroke-dasharray="2.400 1.600"/>
<path d="M10 8.500L10 15L11.700 13.400L12.900 16L14.100 15.500L12.900 12.900L15 12.700Z" fill="#9a9a9a"/></svg>
<svg class="ic" style="left:1469.00px;top:98.00px;" width="8.70" height="13.20" viewBox="0 0 1153 1792" preserveAspectRatio="none"><path fill="#3a3a3a" d="M1133 1043Q1164 1073 1147 1112Q1130 1152 1088 1152H706L907 1628Q917 1653 907.0 1677.0Q897 1701 873 1712L696 1787Q671 1797 647.0 1787.0Q623 1777 612 1753L421 1301L109 1613Q90 1632 64 1632Q52 1632 40 1627Q0 1610 0 1568V64Q0 22 40 5Q52 0 64 0Q91 0 109 19Z"/></svg>
<svg class="ic" style="left:1481.40px;top:102.30px" width="7.40" height="4.50" viewBox="0 0 7.40 4.50"><path d="M0.5 0.5 L3.70 3.90 L6.90 0.5" fill="none" stroke="#333" stroke-width="1.3"/></svg>
<svg class="ic" style="left:1501.70px;top:100.20px;" width="13.50" height="9.80" viewBox="0 288 1792 1344" preserveAspectRatio="none"><path fill="#3a3a3a" d="M555 1335 633 1194Q546 1131 497.0 1035.0Q448 939 448 832Q448 711 509 607Q280 724 128 960Q295 1218 555 1335ZM896 528Q771 528 681.5 617.5Q592 707 592 832Q592 852 606.0 866.0Q620 880 640.0 880.0Q660 880 674.0 866.0Q688 852 688 832Q688 746 749.0 685.0Q810 624 896 624Q916 624 930.0 610.0Q944 596 944.0 576.0Q944 556 930.0 542.0Q916 528 896 528ZM1307 385Q1307 392 1306 394Q1200 583 990.0 961.0Q780 1339 675 1527L626 1616Q616 1632 598 1632Q586 1632 464 1562Q448 1552 448 1534Q448 1522 492 1447Q349 1382 228.5 1274.0Q108 1166 20 1029Q0 998 0.0 960.0Q0 922 20 891Q173 656 400.0 520.0Q627 384 896 384Q985 384 1076 401L1130 304Q1140 288 1158 288Q1163 288 1176.0 294.0Q1189 300 1207.0 309.5Q1225 319 1240.0 328.0Q1255 337 1271.5 346.5Q1288 356 1291 358Q1307 368 1307 385ZM1344 832Q1344 971 1265.0 1085.5Q1186 1200 1056 1250L1336 748Q1344 793 1344 832ZM1772 1029Q1733 1093 1663 1174Q1513 1346 1315.5 1441.0Q1118 1536 896 1536L970 1404Q1182 1386 1362.5 1267.0Q1543 1148 1664 960Q1549 781 1382 666L1445 554Q1540 618 1627.5 707.0Q1715 796 1772 891Q1792 925 1792.0 960.0Q1792 995 1772 1029Z"/></svg>
<svg class="ic" style="left:1527.00px;top:100.80px;" width="13.80" height="8.80" viewBox="0 384 1792 1152" preserveAspectRatio="none"><path fill="#3a3a3a" d="M1664 960Q1512 724 1283 607Q1344 711 1344 832Q1344 1017 1212.5 1148.5Q1081 1280 896.0 1280.0Q711 1280 579.5 1148.5Q448 1017 448 832Q448 711 509 607Q280 724 128 960Q261 1165 461.5 1286.5Q662 1408 896.0 1408.0Q1130 1408 1330.5 1286.5Q1531 1165 1664 960ZM896 528Q771 528 681.5 617.5Q592 707 592 832Q592 852 606.0 866.0Q620 880 640.0 880.0Q660 880 674.0 866.0Q688 852 688 832Q688 746 749.0 685.0Q810 624 896 624Q916 624 930.0 610.0Q944 596 944.0 576.0Q944 556 930.0 542.0Q916 528 896 528ZM1772 1029Q1632 1259 1395.5 1397.5Q1159 1536 896.0 1536.0Q633 1536 396.5 1397.0Q160 1258 20 1029Q0 994 0.0 960.0Q0 926 20 891Q160 662 396.5 523.0Q633 384 896.0 384.0Q1159 384 1395.5 523.0Q1632 662 1772 891Q1792 926 1792.0 960.0Q1792 994 1772 1029Z"/></svg>
<div class="btn" style="left:1570px;top:87px;width:94px;height:34px"></div>
<span class="t" style="left:1586.90px;top:94px;font-size:14px;color:#333;letter-spacing:-0.496px;">Create set</span>
<div class="btn" style="left:1667px;top:87px;width:79px;height:34px"></div>
<span class="t" style="left:1683.00px;top:94px;font-size:14px;color:#333;letter-spacing:-0.087px;">Filter</span>
<svg class="ic" style="left:1721.80px;top:102.30px" width="8.00" height="4.50" viewBox="0 0 8.00 4.50"><path d="M0.5 0.5 L4.00 3.90 L7.50 0.5" fill="none" stroke="#333" stroke-width="1.3"/></svg>
<div class="b" style="left:1629px;top:144px;width:250px;height:600px;background:rgba(244,244,244,.8);border:1px solid #b9dce8;border-radius:4px;overflow:hidden"></div>
<div class="b" style="left:1863px;top:145px;width:15px;height:598px;background:#f1f1f1"></div>
<div class="b" style="left:1865px;top:260px;width:11px;height:378px;background:#c3c3c3"></div>
<svg class="ic" style="left:1866.800px;top:150.200px" width="7.400" height="4.600" viewBox="0 0 8 5"><path d="M0 5L4 0.500L8 5Z" fill="#5a5a5a"/></svg>
<svg class="ic" style="left:1866.800px;top:717.600px" width="7.400" height="4.600" viewBox="0 0 8 5"><path d="M0 0L4 4.500L8 0Z" fill="#5a5a5a"/></svg>
<div class="b" style="left:1863px;top:728px;width:15px;height:15px;background:#f8f8f8;border-left:1px solid #ddd;border-top:1px solid #ddd"></div>
<svg class="ic" style="left:1869px;top:734px" width="8" height="8" viewBox="0 0 8 8"><path d="M0.500 7.500L7.500 0.500M4.500 7.500L7.500 4.500" stroke="#777" stroke-width="0.9"/></svg>
<div class="b" style="left:1630px;top:145px;width:233px;height:6px;overflow:hidden"><svg class="ic" style="left:80.9px;top:-3.4px" width="12" height="7.500" viewBox="0 0 12 7.5" fill="#7b7b73"><path d="M0 3.750Q2.800 0 6 0Q9.200 0 12 3.750Q9.200 7.500 6 7.500Q2.800 7.500 0 3.750Z"/><path d="M1.200 3.750Q2.400 2.300 3.700 1.800Q3 3.750 3.700 5.700Q2.400 5.200 1.200 3.750ZM10.800 3.750Q9.600 2.300 8.300 1.800Q9 3.750 8.300 5.700Q9.600 5.200 10.800 3.750Z" fill="#e4e4e0" opacity="0.85"/><circle cx="6" cy="3.600" r="1.150" fill="#f2f2f0"/></svg><span class="t" style="left:97.50px;top:-11px;font-size:11px;color:#5596b8;letter-spacing:-0.282px;">FWEPin</span></div>
<svg class="ic" style="left:1710.9px;top:167.6px" width="12" height="7.500" viewBox="0 0 12 7.5" fill="#7b7b73"><path d="M0 3.750Q2.800 0 6 0Q9.200 0 12 3.750Q9.200 7.500 6 7.500Q2.800 7.500 0 3.750Z"/><path d="M1.200 3.750Q2.400 2.300 3.700 1.800Q3 3.750 3.700 5.700Q2.400 5.200 1.200 3.750ZM10.800 3.750Q9.600 2.300 8.300 1.800Q9 3.750 8.300 5.700Q9.600 5.200 10.800 3.750Z" fill="#e4e4e0" opacity="0.85"/><circle cx="6" cy="3.600" r="1.150" fill="#f2f2f0"/></svg>
<span class="t" style="left:1727.50px;top:160px;font-size:11px;color:#5596b8;letter-spacing:-0.158px;">FWEPout</span>
<svg class="ic" style="left:1710.9px;top:193.6px" width="12" height="7.500" viewBox="0 0 12 7.5" fill="#7b7b73"><path d="M0 3.750Q2.800 0 6 0Q9.200 0 12 3.750Q9.200 7.500 6 7.500Q2.800 7.500 0 3.750Z"/><path d="M1.200 3.750Q2.400 2.300 3.700 1.800Q3 3.750 3.700 5.700Q2.400 5.200 1.200 3.750ZM10.800 3.750Q9.600 2.300 8.300 1.800Q9 3.750 8.300 5.700Q9.600 5.200 10.800 3.750Z" fill="#e4e4e0" opacity="0.85"/><circle cx="6" cy="3.600" r="1.150" fill="#f2f2f0"/></svg>
<span class="t" style="left:1727.50px;top:186px;font-size:11px;color:#5596b8;letter-spacing:0.060px;">FWflap</span>
<svg class="ic" style="left:1710.9px;top:219.6px" width="12" height="7.500" viewBox="0 0 12 7.5" fill="#7b7b73"><path d="M0 3.750Q2.800 0 6 0Q9.200 0 12 3.750Q9.200 7.500 6 7.500Q2.800 7.500 0 3.750Z"/><path d="M1.200 3.750Q2.400 2.300 3.700 1.800Q3 3.750 3.700 5.700Q2.400 5.200 1.200 3.750ZM10.800 3.750Q9.600 2.300 8.300 1.800Q9 3.750 8.300 5.700Q9.600 5.200 10.800 3.750Z" fill="#e4e4e0" opacity="0.85"/><circle cx="6" cy="3.600" r="1.150" fill="#f2f2f0"/></svg>
<span class="t" style="left:1727.50px;top:212px;font-size:11px;color:#5596b8;letter-spacing:-0.072px;">FWmainwing</span>
<svg class="ic" style="left:1710.9px;top:245.6px" width="12" height="7.500" viewBox="0 0 12 7.5" fill="#7b7b73"><path d="M0 3.750Q2.800 0 6 0Q9.200 0 12 3.750Q9.200 7.500 6 7.500Q2.800 7.500 0 3.750Z"/><path d="M1.200 3.750Q2.400 2.300 3.700 1.800Q3 3.750 3.700 5.700Q2.400 5.200 1.200 3.750ZM10.800 3.750Q9.600 2.300 8.300 1.800Q9 3.750 8.300 5.700Q9.600 5.200 10.800 3.750Z" fill="#e4e4e0" opacity="0.85"/><circle cx="6" cy="3.600" r="1.150" fill="#f2f2f0"/></svg>
<span class="t" style="left:1727.50px;top:238px;font-size:11px;color:#5596b8;letter-spacing:-0.226px;">Frontsusp</span>
<svg class="ic" style="left:1710.9px;top:271.6px" width="12" height="7.500" viewBox="0 0 12 7.5" fill="#7b7b73"><path d="M0 3.750Q2.800 0 6 0Q9.200 0 12 3.750Q9.200 7.500 6 7.500Q2.800 7.500 0 3.750Z"/><path d="M1.200 3.750Q2.400 2.300 3.700 1.800Q3 3.750 3.700 5.700Q2.400 5.200 1.200 3.750ZM10.800 3.750Q9.600 2.300 8.300 1.800Q9 3.750 8.300 5.700Q9.600 5.200 10.800 3.750Z" fill="#e4e4e0" opacity="0.85"/><circle cx="6" cy="3.600" r="1.150" fill="#f2f2f0"/></svg>
<span class="t" style="left:1727.50px;top:264px;font-size:11px;color:#5596b8;letter-spacing:0.034px;">Fronttire</span>
<svg class="ic" style="left:1710.9px;top:297.6px" width="12" height="7.500" viewBox="0 0 12 7.5" fill="#7b7b73"><path d="M0 3.750Q2.800 0 6 0Q9.200 0 12 3.750Q9.200 7.500 6 7.500Q2.800 7.500 0 3.750Z"/><path d="M1.200 3.750Q2.400 2.300 3.700 1.800Q3 3.750 3.700 5.700Q2.400 5.200 1.200 3.750ZM10.800 3.750Q9.600 2.300 8.300 1.800Q9 3.750 8.300 5.700Q9.600 5.200 10.800 3.750Z" fill="#e4e4e0" opacity="0.85"/><circle cx="6" cy="3.600" r="1.150" fill="#f2f2f0"/></svg>
<span class="t" style="left:1727.50px;top:290px;font-size:11px;color:#5596b8;">Fronttirecp</span>
<svg class="ic" style="left:1710.9px;top:323.6px" width="12" height="7.500" viewBox="0 0 12 7.5" fill="#7b7b73"><path d="M0 3.750Q2.800 0 6 0Q9.200 0 12 3.750Q9.200 7.500 6 7.500Q2.800 7.500 0 3.750Z"/><path d="M1.200 3.750Q2.400 2.300 3.700 1.800Q3 3.750 3.700 5.700Q2.400 5.200 1.200 3.750ZM10.800 3.750Q9.600 2.300 8.300 1.800Q9 3.750 8.300 5.700Q9.600 5.200 10.800 3.750Z" fill="#e4e4e0" opacity="0.85"/><circle cx="6" cy="3.600" r="1.150" fill="#f2f2f0"/></svg>
<span class="t" style="left:1727.50px;top:316px;font-size:11px;color:#5596b8;letter-spacing:0.013px;">Frontur</span>
<svg class="ic" style="left:1710.9px;top:349.6px" width="12" height="7.500" viewBox="0 0 12 7.5" fill="#7b7b73"><path d="M0 3.750Q2.800 0 6 0Q9.200 0 12 3.750Q9.200 7.500 6 7.500Q2.800 7.500 0 3.750Z"/><path d="M1.200 3.750Q2.400 2.300 3.700 1.800Q3 3.750 3.700 5.700Q2.400 5.200 1.200 3.750ZM10.800 3.750Q9.600 2.300 8.300 1.800Q9 3.750 8.300 5.700Q9.600 5.200 10.800 3.750Z" fill="#e4e4e0" opacity="0.85"/><circle cx="6" cy="3.600" r="1.150" fill="#f2f2f0"/></svg>
<span class="t" style="left:1727.50px;top:342px;font-size:11px;color:#5596b8;letter-spacing:-0.602px;">MRF_F</span>
<svg class="ic" style="left:1710.9px;top:375.6px" width="12" height="7.500" viewBox="0 0 12 7.5" fill="#7b7b73"><path d="M0 3.750Q2.800 0 6 0Q9.200 0 12 3.750Q9.200 7.500 6 7.500Q2.800 7.500 0 3.750Z"/><path d="M1.200 3.750Q2.400 2.300 3.700 1.800Q3 3.750 3.700 5.700Q2.400 5.200 1.200 3.750ZM10.800 3.750Q9.600 2.300 8.300 1.800Q9 3.750 8.300 5.700Q9.600 5.200 10.800 3.750Z" fill="#e4e4e0" opacity="0.85"/><circle cx="6" cy="3.600" r="1.150" fill="#f2f2f0"/></svg>
<span class="t" style="left:1727.50px;top:368px;font-size:11px;color:#5596b8;letter-spacing:-0.741px;">MRF_R</span>
<svg class="ic" style="left:1710.9px;top:401.6px" width="12" height="7.500" viewBox="0 0 12 7.5" fill="#7b7b73"><path d="M0 3.750Q2.800 0 6 0Q9.200 0 12 3.750Q9.200 7.500 6 7.500Q2.800 7.500 0 3.750Z"/><path d="M1.200 3.750Q2.400 2.300 3.700 1.800Q3 3.750 3.700 5.700Q2.400 5.200 1.200 3.750ZM10.800 3.750Q9.600 2.300 8.300 1.800Q9 3.750 8.300 5.700Q9.600 5.200 10.800 3.750Z" fill="#e4e4e0" opacity="0.85"/><circle cx="6" cy="3.600" r="1.150" fill="#f2f2f0"/></svg>
<span class="t" style="left:1727.50px;top:394px;font-size:11px;color:#5596b8;letter-spacing:-0.666px;">RWEP</span>
<svg class="ic" style="left:1710.9px;top:427.6px" width="12" height="7.500" viewBox="0 0 12 7.5" fill="#7b7b73"><path d="M0 3.750Q2.800 0 6 0Q9.200 0 12 3.750Q9.200 7.500 6 7.500Q2.800 7.500 0 3.750Z"/><path d="M1.200 3.750Q2.400 2.300 3.700 1.800Q3 3.750 3.700 5.700Q2.400 5.200 1.200 3.750ZM10.800 3.750Q9.600 2.300 8.300 1.800Q9 3.750 8.300 5.700Q9.600 5.200 10.800 3.750Z" fill="#e4e4e0" opacity="0.85"/><circle cx="6" cy="3.600" r="1.150" fill="#f2f2f0"/></svg>
<span class="t" style="left:1727.50px;top:420px;font-size:11px;color:#5596b8;letter-spacing:-0.147px;">RWflapa</span>
<svg class="ic" style="left:1710.9px;top:453.6px" width="12" height="7.500" viewBox="0 0 12 7.5" fill="#7b7b73"><path d="M0 3.750Q2.800 0 6 0Q9.200 0 12 3.750Q9.200 7.500 6 7.500Q2.800 7.500 0 3.750Z"/><path d="M1.200 3.750Q2.400 2.300 3.700 1.800Q3 3.750 3.700 5.700Q2.400 5.200 1.200 3.750ZM10.800 3.750Q9.600 2.300 8.300 1.800Q9 3.750 8.300 5.700Q9.600 5.200 10.800 3.750Z" fill="#e4e4e0" opacity="0.85"/><circle cx="6" cy="3.600" r="1.150" fill="#f2f2f0"/></svg>
<span class="t" style="left:1727.50px;top:446px;font-size:11px;color:#5596b8;letter-spacing:-0.031px;">RWflapb</span>
<svg class="ic" style="left:1710.9px;top:479.6px" width="12" height="7.500" viewBox="0 0 12 7.5" fill="#7b7b73"><path d="M0 3.750Q2.800 0 6 0Q9.200 0 12 3.750Q9.200 7.500 6 7.500Q2.800 7.500 0 3.750Z"/><path d="M1.200 3.750Q2.400 2.300 3.700 1.800Q3 3.750 3.700 5.700Q2.400 5.200 1.200 3.750ZM10.800 3.750Q9.600 2.300 8.300 1.800Q9 3.750 8.300 5.700Q9.600 5.200 10.800 3.750Z" fill="#e4e4e0" opacity="0.85"/><circle cx="6" cy="3.600" r="1.150" fill="#f2f2f0"/></svg>
<span class="t" style="left:1727.50px;top:472px;font-size:11px;color:#5596b8;letter-spacing:-0.079px;">RWflapc</span>
<svg class="ic" style="left:1710.9px;top:505.6px" width="12" height="7.500" viewBox="0 0 12 7.5" fill="#7b7b73"><path d="M0 3.750Q2.800 0 6 0Q9.200 0 12 3.750Q9.200 7.500 6 7.500Q2.800 7.500 0 3.750Z"/><path d="M1.200 3.750Q2.400 2.300 3.700 1.800Q3 3.750 3.700 5.700Q2.400 5.200 1.200 3.750ZM10.800 3.750Q9.600 2.300 8.300 1.800Q9 3.750 8.300 5.700Q9.600 5.200 10.800 3.750Z" fill="#e4e4e0" opacity="0.85"/><circle cx="6" cy="3.600" r="1.150" fill="#f2f2f0"/></svg>
<span class="t" style="left:1727.50px;top:498px;font-size:11px;color:#5596b8;letter-spacing:-0.031px;">RWflapd</span>
<svg class="ic" style="left:1710.9px;top:531.6px" width="12" height="7.500" viewBox="0 0 12 7.5" fill="#7b7b73"><path d="M0 3.750Q2.800 0 6 0Q9.200 0 12 3.750Q9.200 7.500 6 7.500Q2.800 7.500 0 3.750Z"/><path d="M1.200 3.750Q2.400 2.300 3.700 1.800Q3 3.750 3.700 5.700Q2.400 5.200 1.200 3.750ZM10.800 3.750Q9.600 2.300 8.300 1.800Q9 3.750 8.300 5.700Q9.600 5.200 10.800 3.750Z" fill="#e4e4e0" opacity="0.85"/><circle cx="6" cy="3.600" r="1.150" fill="#f2f2f0"/></svg>
<span class="t" style="left:1727.50px;top:524px;font-size:11px;color:#3aa3ea;letter-spacing:-0.192px;">Radiator</span>
<svg class="ic" style="left:1710.9px;top:557.6px" width="12" height="7.500" viewBox="0 0 12 7.5" fill="#7b7b73"><path d="M0 3.750Q2.800 0 6 0Q9.200 0 12 3.750Q9.200 7.500 6 7.500Q2.800 7.500 0 3.750Z"/><path d="M1.200 3.750Q2.400 2.300 3.700 1.800Q3 3.750 3.700 5.700Q2.400 5.200 1.200 3.750ZM10.800 3.750Q9.600 2.300 8.300 1.800Q9 3.750 8.300 5.700Q9.600 5.200 10.800 3.750Z" fill="#e4e4e0" opacity="0.85"/><circle cx="6" cy="3.600" r="1.150" fill="#f2f2f0"/></svg>
<span class="t" style="left:1727.50px;top:550px;font-size:11px;color:#5596b8;letter-spacing:-0.175px;">Radsupport</span>
<svg class="ic" style="left:1710.9px;top:583.6px" width="12" height="7.500" viewBox="0 0 12 7.5" fill="#7b7b73"><path d="M0 3.750Q2.800 0 6 0Q9.200 0 12 3.750Q9.200 7.500 6 7.500Q2.800 7.500 0 3.750Z"/><path d="M1.200 3.750Q2.400 2.300 3.700 1.800Q3 3.750 3.700 5.700Q2.400 5.200 1.200 3.750ZM10.800 3.750Q9.600 2.300 8.300 1.800Q9 3.750 8.300 5.700Q9.600 5.200 10.800 3.750Z" fill="#e4e4e0" opacity="0.85"/><circle cx="6" cy="3.600" r="1.150" fill="#f2f2f0"/></svg>
<span class="t" style="left:1727.50px;top:576px;font-size:11px;color:#5596b8;letter-spacing:-0.558px;">Rearsusp</span>
<svg class="ic" style="left:1710.9px;top:609.6px" width="12" height="7.500" viewBox="0 0 12 7.5" fill="#7b7b73"><path d="M0 3.750Q2.800 0 6 0Q9.200 0 12 3.750Q9.200 7.500 6 7.500Q2.800 7.500 0 3.750Z"/><path d="M1.200 3.750Q2.400 2.300 3.700 1.800Q3 3.750 3.700 5.700Q2.400 5.200 1.200 3.750ZM10.800 3.750Q9.600 2.300 8.300 1.800Q9 3.750 8.300 5.700Q9.600 5.200 10.800 3.750Z" fill="#e4e4e0" opacity="0.85"/><circle cx="6" cy="3.600" r="1.150" fill="#f2f2f0"/></svg>
<span class="t" style="left:1727.50px;top:602px;font-size:11px;color:#5596b8;letter-spacing:-0.188px;">Reartire</span>
<svg class="ic" style="left:1710.9px;top:635.6px" width="12" height="7.500" viewBox="0 0 12 7.5" fill="#7b7b73"><path d="M0 3.750Q2.800 0 6 0Q9.200 0 12 3.750Q9.200 7.500 6 7.500Q2.800 7.500 0 3.750Z"/><path d="M1.200 3.750Q2.400 2.300 3.700 1.800Q3 3.750 3.700 5.700Q2.400 5.200 1.200 3.750ZM10.800 3.750Q9.600 2.300 8.300 1.800Q9 3.750 8.300 5.700Q9.600 5.200 10.800 3.750Z" fill="#e4e4e0" opacity="0.85"/><circle cx="6" cy="3.600" r="1.150" fill="#f2f2f0"/></svg>
<span class="t" style="left:1727.50px;top:628px;font-size:11px;color:#5596b8;letter-spacing:-0.315px;">ReartireCP</span>
<svg class="ic" style="left:1710.9px;top:661.6px" width="12" height="7.500" viewBox="0 0 12 7.5" fill="#7b7b73"><path d="M0 3.750Q2.800 0 6 0Q9.200 0 12 3.750Q9.200 7.500 6 7.500Q2.800 7.500 0 3.750Z"/><path d="M1.200 3.750Q2.400 2.300 3.700 1.800Q3 3.750 3.700 5.700Q2.400 5.200 1.200 3.750ZM10.800 3.750Q9.600 2.300 8.300 1.800Q9 3.750 8.300 5.700Q9.600 5.200 10.800 3.750Z" fill="#e4e4e0" opacity="0.85"/><circle cx="6" cy="3.600" r="1.150" fill="#f2f2f0"/></svg>
<span class="t" style="left:1727.50px;top:654px;font-size:11px;color:#5596b8;letter-spacing:-0.398px;">Rearur</span>
<svg class="ic" style="left:1710.9px;top:687.6px" width="12" height="7.500" viewBox="0 0 12 7.5" fill="#7b7b73"><path d="M0 3.750Q2.800 0 6 0Q9.200 0 12 3.750Q9.200 7.500 6 7.500Q2.800 7.500 0 3.750Z"/><path d="M1.200 3.750Q2.400 2.300 3.700 1.800Q3 3.750 3.700 5.700Q2.400 5.200 1.200 3.750ZM10.800 3.750Q9.600 2.300 8.300 1.800Q9 3.750 8.300 5.700Q9.600 5.200 10.800 3.750Z" fill="#e4e4e0" opacity="0.85"/><circle cx="6" cy="3.600" r="1.150" fill="#f2f2f0"/></svg>
<span class="t" style="left:1727.50px;top:680px;font-size:11px;color:#5596b8;letter-spacing:-0.232px;">Sidepood</span>
<svg class="ic" style="left:1710.9px;top:713.6px" width="12" height="7.500" viewBox="0 0 12 7.5" fill="#7b7b73"><path d="M0 3.750Q2.800 0 6 0Q9.200 0 12 3.750Q9.200 7.500 6 7.500Q2.800 7.500 0 3.750Z"/><path d="M1.200 3.750Q2.400 2.300 3.700 1.800Q3 3.750 3.700 5.700Q2.400 5.200 1.200 3.750ZM10.800 3.750Q9.600 2.300 8.300 1.800Q9 3.750 8.300 5.700Q9.600 5.200 10.800 3.750Z" fill="#e4e4e0" opacity="0.85"/><circle cx="6" cy="3.600" r="1.150" fill="#f2f2f0"/></svg>
<span class="t" style="left:1727.50px;top:706px;font-size:11px;color:#5596b8;letter-spacing:0.044px;">body</span>
<div class="b" style="left:1630px;top:733px;width:233px;height:10px;overflow:hidden"><svg class="ic" style="left:28.500px;top:2.500px" width="9" height="9" viewBox="0 0 9 9"><rect x="0.5" y="0.5" width="8" height="8" rx="1.500" fill="#fff" stroke="#8c8cc8"/><path d="M2 4.500H7" stroke="#2a2ab0" stroke-width="1.2"/></svg><span class="t" style="left:40.30px;top:-4px;font-size:11px;color:#5596b8;letter-spacing:-0.073px;">Geometry Primitives</span></div>
<svg class="ic" style="left:771px;top:830px" width="240" height="217" viewBox="771 830 240 217">
<g fill="none" stroke="#bdbdbd" stroke-width="1.5" stroke-linejoin="round">
<path d="M851 853L861 843L871 853Z"/><path d="M851 985L861 995L871 985Z"/>
<path d="M795.500 909L785 919L795.500 929Z"/><path d="M926.500 909L937 919L926.500 929Z"/>
<path d="M913.500 982L923 973L932.500 982H929.500V990.500H925.500V985H920.500V990.500H916.500V982Z"/>
<path d="M783.500 958.500L790.500 950.500L798.500 958L794.500 958.500Q794.500 971 802 977L797 983.500Q787.500 976 787.500 959Z"/>
<path d="M798.500 984L803.500 978Q811 983 821 982L820.500 978L829.500 988L821 997L821.500 992.500Q809 993.500 798.500 984Z"/>
</g>
<path d="M825 881.500L889 880L896.500 894L833.500 895Z" fill="#e9e9e9" stroke="#707070" stroke-width="1.3" stroke-linejoin="round"/>
<path d="M825 881.500L833.500 895V956L825 944Z" fill="#e4e4e4" stroke="#707070" stroke-width="1.3" stroke-linejoin="round"/>
<path d="M833.500 895L896.500 894V956H833.500Z" fill="#e8e8e8" stroke="#707070" stroke-width="1.3" stroke-linejoin="round"/>
<text transform="translate(869.300 937.500) rotate(-90)" font-family="Liberation Sans, sans-serif" font-size="11" fill="#686868" textLength="24" lengthAdjust="spacingAndGlyphs">LEFT</text>
<text transform="translate(857.500 884) rotate(73) scale(1 0.55)" font-family="Liberation Sans, sans-serif" font-size="7" fill="#999">TOP</text>
<path d="M887.500 942.500L896.500 955.500" stroke="#eec3c3" stroke-width="1.2"/>
<path d="M896.800 956V886" stroke="#8484ea" stroke-width="1.8"/><path d="M894.600 888L896.800 882.500L899 888Z" fill="#8484ea"/>
<path d="M896.500 956.200L827 957.800" stroke="#72c672" stroke-width="1.8"/><path d="M828.500 955.600L822.500 958L828.500 960.200Z" fill="#72c672"/>
<text x="893.200" y="879.800" font-family="Liberation Sans, sans-serif" font-size="11.500" fill="#7d7de8">Z</text>
<text x="811.200" y="962" font-family="Liberation Sans, sans-serif" font-size="11.500" fill="#6ccf6c">Y</text>
<text x="882.800" y="943.600" font-family="Liberation Sans, sans-serif" font-size="11.500" fill="#efb9b9">X</text>
</svg>
<div class="b" style="left:782px;top:1025px;width:199px;height:17px;background:#e6e6e6;border:1px solid #bfe0ea"></div>
<svg class="ic" style="left:972px;top:1032px" width="9" height="9" viewBox="0 0 9 9"><path d="M1 8.500L8.500 1M5 8.500L8.500 5" stroke="#999" stroke-width="0.9"/></svg>
<svg class="ic" style="left:1273px;top:1021px" width="150" height="7" viewBox="0 0 150 7"><path d="M1 0V5H148.200V0" fill="none" stroke="#383838" stroke-width="2"/></svg>
<span class="t" style="left:1329.70px;top:1027px;font-size:12px;color:#484848;">0.5 [m]</span>
<div class="b" style="left:1672px;top:1018px;width:138px;height:30px;background:#005f9c;border-radius:3px 3px 0 0"></div>
<div class="b" style="left:1815px;top:1018px;width:75px;height:30px;background:#005f9c;border-radius:3px 3px 0 0"></div>
<svg class="ic" style="left:1680px;top:1025px" width="30" height="21" viewBox="0 0 30 21"><ellipse cx="14.600" cy="9.700" rx="13.600" ry="8.400" fill="#fff"/><path d="M20 15.500L27.500 18.800L24.500 12Z" fill="#fff"/></svg>
<svg class="ic" style="left:1687.30px;top:1029.40px;transform:rotate(-5deg)" width="15.00" height="10.40" viewBox="0 0 1920 1664" preserveAspectRatio="none"><path fill="#005f9c" d="M756.5 756.5Q841 672 960.0 672.0Q1079 672 1163.5 756.5Q1248 841 1248.0 960.0Q1248 1079 1163.5 1163.5Q1079 1248 960.0 1248.0Q841 1248 756.5 1163.5Q672 1079 672.0 960.0Q672 841 756.5 756.5ZM1664 256Q1770 256 1845.0 331.0Q1920 406 1920 512V1408Q1920 1514 1845.0 1589.0Q1770 1664 1664 1664H256Q150 1664 75.0 1589.0Q0 1514 0 1408V512Q0 406 75.0 331.0Q150 256 256 256H480L531 120Q550 71 600.5 35.5Q651 0 704 0H1216Q1269 0 1319.5 35.5Q1370 71 1389 120L1440 256ZM643.5 1276.5Q775 1408 960.0 1408.0Q1145 1408 1276.5 1276.5Q1408 1145 1408.0 960.0Q1408 775 1276.5 643.5Q1145 512 960.0 512.0Q775 512 643.5 643.5Q512 775 512.0 960.0Q512 1145 643.5 1276.5Z"/></svg>
<span class="t" style="left:1716.50px;top:1025px;font-size:12px;color:#fff;">Report an issue</span>
<svg class="ic" style="left:1828px;top:1028.500px" width="17" height="15" viewBox="0 0 17 15"><path d="M1 0H15.400Q16.400 0 16.400 1V9.500Q16.400 10.500 15.400 10.500H7L3.300 14.300V10.500H1Q0 10.500 0 9.500V1Q0 0 1 0Z" fill="#fff"/></svg>
<span class="t" style="left:1855.00px;top:1025px;font-size:12px;color:#fff;">Chat</span>
<svg class="ic" style="left:1020px;top:236px" width="330" height="580" viewBox="1020 236 330 580">
<defs>
<linearGradient id="gF1" x1="0" y1="0" x2="0" y2="1"><stop offset="0" stop-color="#a3b5b8"/><stop offset="1" stop-color="#8e9fa2"/></linearGradient>
<linearGradient id="gF2" x1="0" y1="0" x2="0" y2="1"><stop offset="0" stop-color="#9db0b3"/><stop offset="1" stop-color="#829194"/></linearGradient>
<linearGradient id="gF3" x1="0" y1="0" x2="0" y2="1"><stop offset="0" stop-color="#93a4a7"/><stop offset="0.45" stop-color="#758487"/><stop offset="0.72" stop-color="#566163"/><stop offset="0.86" stop-color="#6b797b"/><stop offset="1" stop-color="#a1b3b6"/></linearGradient>
<linearGradient id="gBar" x1="0" y1="0" x2="0" y2="1"><stop offset="0" stop-color="#a1b3b6"/><stop offset="1" stop-color="#7a898c"/></linearGradient>
<linearGradient id="gTube" x1="0" y1="0" x2="1" y2="0"><stop offset="0" stop-color="#8b9c9f"/><stop offset="0.5" stop-color="#a3b5b8"/><stop offset="1" stop-color="#8b9c9f"/></linearGradient>
<linearGradient id="gTireR" x1="0" y1="0" x2="0" y2="1"><stop offset="0" stop-color="#7a898c"/><stop offset="0.12" stop-color="#93a5a8"/><stop offset="0.5" stop-color="#a0b2b5"/><stop offset="0.8" stop-color="#93a5a8"/><stop offset="1" stop-color="#5e6a6d"/></linearGradient>
<linearGradient id="gTireF" x1="0" y1="0" x2="0" y2="1"><stop offset="0" stop-color="#7a898c"/><stop offset="0.1" stop-color="#93a5a8"/><stop offset="0.45" stop-color="#a0b2b5"/><stop offset="1" stop-color="#8d9ea1"/></linearGradient>
<linearGradient id="gSide" x1="0" y1="0" x2="1" y2="0"><stop offset="0" stop-color="#8d9ea1"/><stop offset="1" stop-color="#9fb1b4"/></linearGradient>
<linearGradient id="gHead" x1="0" y1="0" x2="1" y2="0"><stop offset="0" stop-color="#7d8c8f"/><stop offset="0.35" stop-color="#98aaad"/><stop offset="1" stop-color="#a1b3b6"/></linearGradient>
<linearGradient id="gBodyTop" x1="0" y1="1" x2="1" y2="0"><stop offset="0" stop-color="#667375"/><stop offset="0.55" stop-color="#505b5d"/><stop offset="1" stop-color="#3f484a"/></linearGradient>
<linearGradient id="gBody" x1="0" y1="0" x2="1" y2="1"><stop offset="0" stop-color="#566163"/><stop offset="0.5" stop-color="#6b797b"/><stop offset="1" stop-color="#758487"/></linearGradient>
<linearGradient id="gPod" x1="0" y1="0" x2="1" y2="0"><stop offset="0" stop-color="#4f5a5c"/><stop offset="0.28" stop-color="#6b797b"/><stop offset="0.6" stop-color="#7a898c"/><stop offset="1" stop-color="#738285"/></linearGradient>
<linearGradient id="gPodV" x1="0" y1="0" x2="0" y2="1"><stop offset="0" stop-color="#5e6a6d" stop-opacity="0.55"/><stop offset="0.35" stop-color="#5e6a6d" stop-opacity="0"/><stop offset="0.8" stop-color="#5e6a6d" stop-opacity="0"/><stop offset="1" stop-color="#566163" stop-opacity="0.7"/></linearGradient>
<linearGradient id="gFlapU" x1="0" y1="0" x2="0" y2="1"><stop offset="0" stop-color="#9fb1b4"/><stop offset="0.45" stop-color="#98aaad"/><stop offset="1" stop-color="#7d8d90"/></linearGradient>
<linearGradient id="gMain" x1="0" y1="0" x2="0" y2="1"><stop offset="0" stop-color="#7a898c"/><stop offset="1" stop-color="#4b5658"/></linearGradient>
<linearGradient id="gNose" x1="0" y1="0" x2="0" y2="1"><stop offset="0" stop-color="#4b5658"/><stop offset="0.45" stop-color="#a0b2b5"/><stop offset="0.7" stop-color="#8e9fa2"/><stop offset="1" stop-color="#566163"/></linearGradient>
<radialGradient id="gHl" cx="0.5" cy="0.5" r="0.5"><stop offset="0" stop-color="#a3b5b8"/><stop offset="0.5" stop-color="#a3b5b8" stop-opacity="0.8"/><stop offset="1" stop-color="#a3b5b8" stop-opacity="0"/></radialGradient>
<filter id="b1" x="-5%" y="-5%" width="110%" height="110%"><feGaussianBlur stdDeviation="1.3"/></filter>
</defs>

<!-- rear wing -->
<path d="M1089.500 246.500L1097.500 258L1109 292L1115.300 313L1115.500 475L1097.300 442L1089.500 375Z" fill="#3e4649"/>
<path d="M1097.500 258.200L1221.400 255L1223.600 285.600L1108.400 289.200Z" fill="url(#gF1)"/>
<path d="M1109.300 291L1223.600 287.800L1227.800 324.200L1115.500 329.300L1115.300 313Z" fill="url(#gF2)"/>
<path d="M1115.500 330.400L1226.500 327.100Q1228 348 1240 370.300L1243.300 385.300L1115.500 388Z" fill="url(#gF3)"/>
<path d="M1108.400 289.600L1223.600 286.600M1115.500 329.800L1227.500 325.600" stroke="#e6eded" stroke-width="1.3" fill="none"/>
<path d="M1115.500 388L1243.300 385.300V393.100L1115.500 396.800Z" fill="url(#gBar)"/>
<path d="M1115.500 387.600L1240 385" stroke="#dfe7e7" stroke-width="0.8" fill="none"/>

<!-- posts / tubes -->
<path d="M1156.500 395.500L1167.800 395.200L1172.500 552L1165 553Z" fill="url(#gTube)"/>
<path d="M1160.800 396L1167.500 552" stroke="#829295" stroke-width="0.8" fill="none"/>
<path d="M1165.500 444.500L1194 496.500" stroke="#94a6a9" stroke-width="3.2" fill="none"/>
<path d="M1222 430L1210 475L1203.500 511" stroke="#93a5a8" stroke-width="4.600" fill="none"/>

<!-- seat / headrest -->
<path d="M1195 512.500Q1222 507 1243 506.300L1250 518L1268.800 520V580H1176V545Q1178 524 1188 516Z" fill="#4d585a"/>
<path d="M1192 521.500L1248 517.500L1268.800 519V582H1190.500V540Z" fill="#9db0b3"/>
<path d="M1247.500 520.500Q1222 525 1213 534Q1207.500 540 1207 552V580" stroke="#4d585a" stroke-width="5" fill="none"/>
<path d="M1265 451.300Q1269 453 1268.800 470V526Q1256 527 1250 521Q1249.500 517 1246.500 513Q1240 503 1240 490Q1238 460 1265 451.300Z" fill="url(#gHead)"/>
<path d="M1262.500 369.200Q1238 369.200 1229 392L1197 492Q1187.200 522 1187.400 545V576" stroke="#8c9da0" stroke-width="7.800" fill="none"/>
<path d="M1262.500 369.400Q1239 369.400 1230 392.500L1198 492.500Q1188.200 522 1188.400 545V576" stroke="#a2b4b7" stroke-width="4.200" fill="none"/>
<path d="M1262.500 366Q1237 366 1226.500 390" stroke="#b3c3c6" stroke-width="1" fill="none"/>
<path d="M1191 545V573" stroke="#829295" stroke-width="1" fill="none"/>

<!-- rear tire -->
<path d="M1046.300 543.100L1090 542.300Q1099 546 1103 560Q1106 580 1106.300 632V700L1085 714L1068.800 690L1053 672L1043.800 660Q1034 640 1034.400 600Q1034 553 1046.300 543.100Z" fill="url(#gTireR)"/>
<ellipse cx="1045" cy="603" rx="10.500" ry="59" fill="#8d9ea1"/>
<ellipse cx="1043.600" cy="606" rx="3.800" ry="47" fill="#424b4d"/>
<path d="M1040 606Q1040 570 1046 556" stroke="#9fb1b4" stroke-width="1.2" fill="none"/>

<!-- body -->
<path d="M1116.900 580.600L1145 575L1162.500 571.300L1172.500 573.800L1223.800 578.500L1240 568.800L1286.300 565L1291 574V592L1225 600L1216 712H1156L1150 650L1106.300 640V596Q1108 586 1116.900 580.600Z" fill="#5b676a"/>
<path d="M1116.900 580.600L1145 575L1162.500 571.300L1172.500 573.800V585.500L1150 585.500L1125 591L1112 598.500L1106.300 606V596Q1108 586 1116.900 580.600Z" fill="url(#gBodyTop)"/>
<g filter="url(#b1)"><path d="M1112 598.500Q1150 583 1174 603Q1194 621 1207.500 627.500L1181 634.400Q1150 596 1106.300 616V606Z" fill="#6d7b7e"/>
<path d="M1106.300 616Q1150 596 1181 634.400L1165 637.500L1155.800 642Q1138 612 1106.300 624Z" fill="#647174"/></g>
<path d="M1172.500 573.800L1223.800 578.500L1225 590L1216.300 596V712H1200L1176 693V651L1181 634.400L1207.500 627.500L1191.300 605L1172.500 585.500Z" fill="#5b676a"/>
<path d="M1172.500 573.800L1223.800 578.500L1225 590L1216.300 596L1172.500 585.500Z" fill="#556063"/>
<!-- cockpit small cylinder + rods -->
<path d="M1163.800 560.600L1148 572.500" stroke="#94a6a9" stroke-width="3" fill="none"/>
<circle cx="1168.300" cy="558" r="5.500" fill="#3a4244"/>
<circle cx="1175.600" cy="559.200" r="6.200" fill="#9cafb2"/>
<!-- dark gap between monocoque and sidepod -->
<path d="M1214 596L1226 598L1232 625L1240 660L1250 716L1214 716Z" fill="#3d4649"/>
<!-- sidepod far top + light + cone -->
<path d="M1223.800 578.100L1240 568.800L1286.300 565L1290.600 573.800L1291.300 590L1240 584Z" fill="#5b676a"/>
<path d="M1240 584Q1262 574.500 1290.800 575L1291.300 590.500L1240 585Z" fill="#9fb1b4"/>
<path d="M1225 584.400L1288.800 590.600L1247 597L1225 596.300Z" fill="#a3b5b8"/>
<path d="M1225 596.300L1247 597L1288.800 590.800" stroke="#5b676a" stroke-width="0.8" fill="none"/>
<path d="M1226 597.500L1246 598.800L1240 601.500L1224.500 611Z" fill="#9fb1b4"/>
<!-- sidepod main -->
<path d="M1247.500 595L1297.500 591.300L1307.500 625L1317.500 667.500L1327.500 705L1329.500 730L1326.900 750L1318.800 767.500L1272.500 765Q1262 763 1256 756L1252.500 755L1245 717.500L1238 660L1229 622L1225 610Q1232 600 1247.500 595Z" fill="url(#gPod)"/>
<path d="M1247.500 595L1297.500 591.300L1307.500 625L1317.500 667.500L1327.500 705L1329.500 730L1326.900 750L1318.800 767.500L1272.500 765Q1262 763 1256 756L1252.500 755L1245 717.500L1238 660L1229 622L1225 610Q1232 600 1247.500 595Z" fill="url(#gPodV)"/>
<ellipse cx="1315" cy="732.500" rx="14" ry="11" fill="url(#gHl)"/>

<!-- radiator -->
<path d="M1155.800 642L1180.400 634.400L1179.500 651L1175 689.400L1158.600 690.300Z" fill="#22b1e2"/>
<path d="M1156.300 695L1176.900 693.100L1200 710L1217.500 711.300L1156.300 712.500Z" fill="#616e70"/>
<path d="M1155 644L1165 637L1180.400 634.400L1207 630.500" stroke="#93a5a8" stroke-width="2" fill="none"/>
<path d="M1180 636L1176 691L1158 692.500" stroke="#7d8c8f" stroke-width="1.500" fill="none"/>
<!-- suspension rods -->
<path d="M1224 590L1200 603.800L1158 680" stroke="#93a5a8" stroke-width="2.800" fill="none"/>
<path d="M1155 673.800L1231.300 696.300" stroke="#93a5a8" stroke-width="3" fill="none"/>
<path d="M1162 675.500L1218 688.500" stroke="#8d9ea1" stroke-width="2.200" fill="none"/>
<path d="M1214 696V706L1218 710V700Z" fill="#9fb1b4"/>

<!-- dark side plate over rear tire -->
<path d="M1053 596.300L1056.500 598L1062.500 640L1068.800 690L1085 712V727L1053.800 675Z" fill="#3e4649"/>

<!-- front tire -->
<path d="M1097.500 634.700L1141.200 633.800Q1149 637 1152 650Q1155.500 668 1155.800 690V722H1124L1141 763L1105 763.100Q1095 762 1089 748Q1084 725 1084.700 690Q1085 643 1097.500 634.700Z" fill="url(#gTireF)"/>
<path d="M1143 634.500Q1150 639 1152.500 652Q1154 670 1153.800 690V712" stroke="#849497" stroke-width="4" fill="none" opacity="0.8"/>
<ellipse cx="1094.500" cy="698" rx="9.500" ry="62" fill="#8d9ea1"/>
<ellipse cx="1093.200" cy="700" rx="4" ry="44" fill="#424b4d"/>

<!-- front wing -->
<path d="M1151 712.400L1237.500 711.400L1242 748.100L1141.300 750.200L1128 716Z" fill="url(#gFlapU)"/>
<path d="M1142 750.300L1242.500 748.300L1252 766.300L1142 768Z" fill="url(#gMain)"/>
<path d="M1147 750.600L1241 748.800" stroke="#d3dcdc" stroke-width="0.8" stroke-dasharray="11 5" fill="none"/>
<path d="M1236.300 693.800Q1243 705 1246 722L1251.300 752.500L1254.300 766L1248.800 762.500L1242.500 747.500L1237.500 712.500Z" fill="#3e4649"/>
<path d="M1236.300 693.800Q1243 705 1246 722L1251.300 752.500L1254 765" stroke="#93a5a8" stroke-width="0.9" fill="none"/>
<path d="M1277 721L1260 766" stroke="#93a5a8" stroke-width="2.600" fill="none"/>
<path d="M1142 767.600L1255 766.300Q1264 767 1272.500 771.300Q1280 772.800 1290 772.500H1329Q1333.200 773 1333.200 779.500Q1333.200 786.300 1329 786.300L1285 787.800Q1272 787.500 1260 786.300L1142 790.400Z" fill="url(#gNose)"/>
<path d="M1109.400 692.500L1120 695L1141.200 747.500L1142.200 801.300L1132.100 800.400L1112 767.600Z" fill="#8fa0a3"/>
<path d="M1111.300 767.500L1120 761.300L1140 798.800L1132.500 801.300Z" fill="#5a6669"/>
<path d="M1119.600 699L1140.300 749L1140.600 799L1119.600 763.500Z" fill="#3e4649"/>
</svg>
</body></html>
